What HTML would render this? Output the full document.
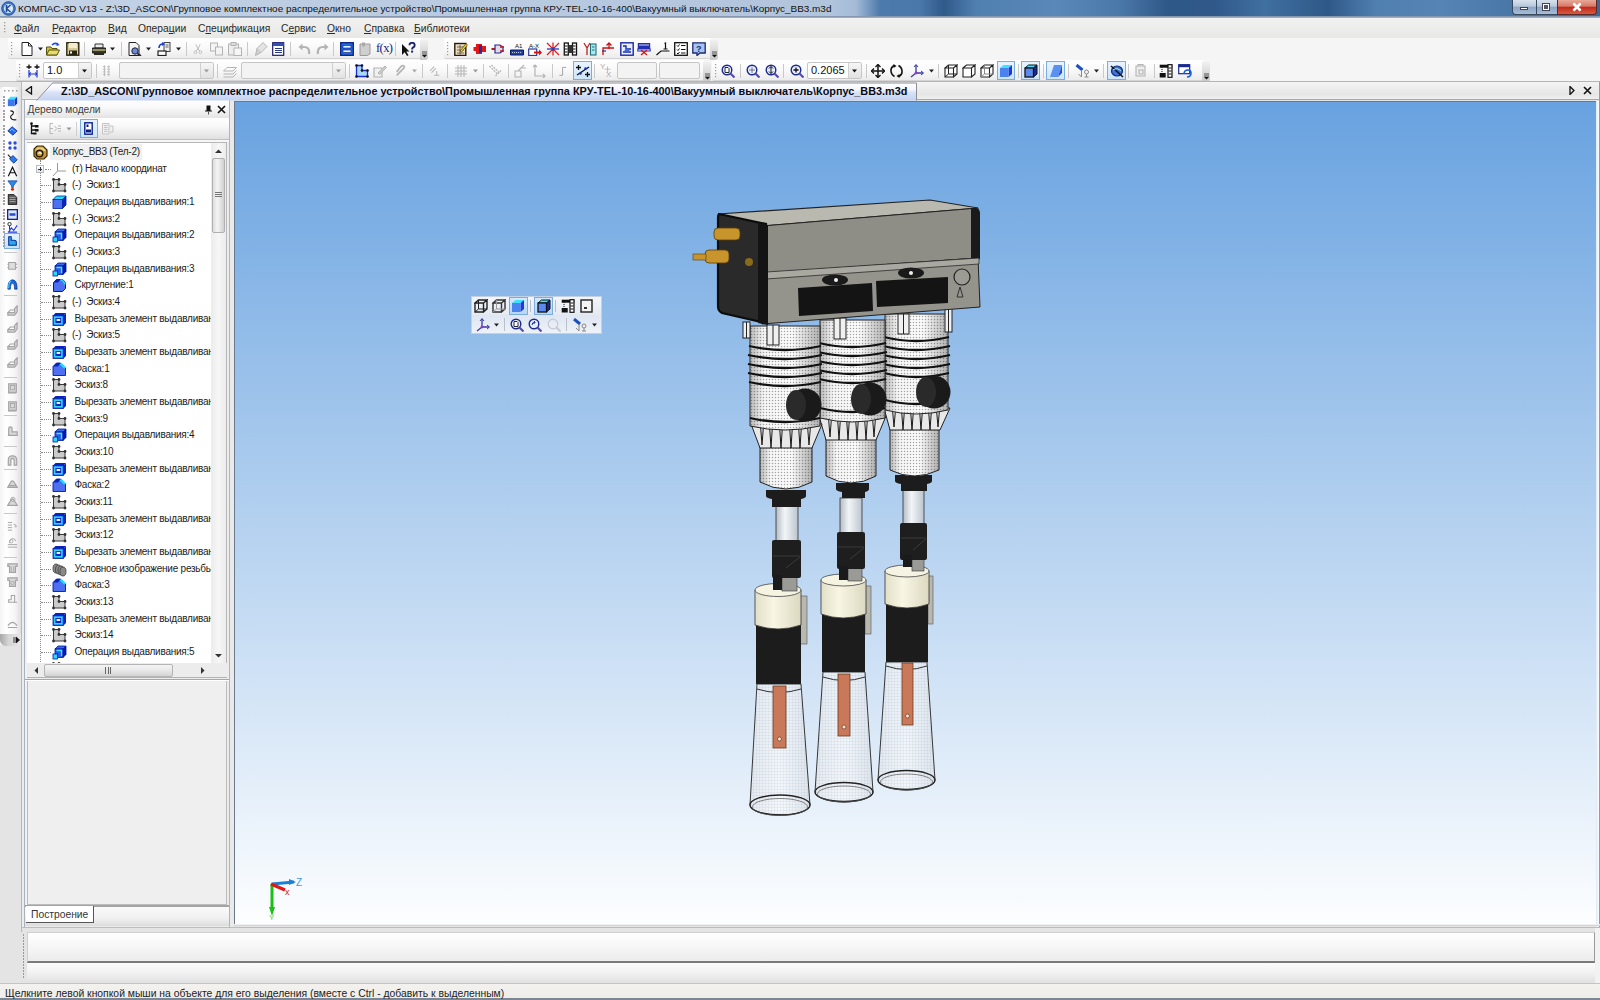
<!DOCTYPE html>
<html><head><meta charset="utf-8">
<style>
*{margin:0;padding:0;box-sizing:border-box}
html,body{width:1600px;height:1000px;overflow:hidden;background:#e4e4e4;font-family:"Liberation Sans",sans-serif;font-size:10px;color:#000;position:relative}
.a{position:absolute}
.tt{font-size:10px;letter-spacing:-0.24px;color:#1c1c1c;white-space:nowrap;line-height:12px}
#title{left:0;top:0;width:1600px;height:17px;background:linear-gradient(90deg,#c4d3e6 0,#bccde2 20%,#b4c6de 45%,#b0c4dc 52%,#a4bad6 53.5%,#4d7aac 55%,#4a78aa 57.5%,#2f5a8a 59%,#5080b0 61%,#5a88b8 66%,#4a78a8 70%,#2e5888 73%,#30598a 76%,#4070a0 79%,#2e5888 83%,#5080b0 86%,#5684b4 90%,#4a78a8 94%,#3a6898 100%)}
#title .t{left:18px;top:2px;font-size:9.95px;color:#111;white-space:nowrap;line-height:13px}
#titleline{left:0;top:16px;width:1600px;height:2px;background:linear-gradient(#7a8ea6,#aab6c4)}
#menu{left:0;top:18px;width:1600px;height:20px;background:linear-gradient(#f1f1f1,#e8e8e7)}
#menu span{position:absolute;top:5px;font-size:10.3px;color:#2a2a2a;white-space:nowrap}
#menu u{text-decoration:underline;text-underline-offset:1px}
#tb1{left:0;top:38px;width:1600px;height:22px;background:#f5f5f5}
#tb2{left:0;top:60px;width:1600px;height:22px;background:#f5f5f5;border-bottom:1px solid #c4c4c4}
.bar{position:absolute;background:linear-gradient(#fbfbfb,#f4f4f4 60%,#e4e4e4);border-bottom:1px solid #c8c8c8;border-radius:0 3px 3px 0}
#tabbar{left:22px;top:82px;width:1578px;height:19px;background:linear-gradient(#f4f4f4,#e9e9e9);border-top:1px solid #b9b9b9}
#lefttb{left:0;top:90px;width:21px;height:556px;background:linear-gradient(90deg,#f7f7f7,#ffffff 40%,#ececec)}
#panel{left:22px;top:100px;width:209px;height:828px;background:#ececec;border-left:1px solid #c9c9c9}
#viewport{left:234px;top:101px;width:1364px;height:825px;background:linear-gradient(#68a2e0 0%,#fdfeff 100%);border-left:1px solid #6b7a8a;border-top:1px solid #6b7a8a}
#cmd{left:22px;top:928px;width:1578px;height:55px;background:#e6e6e6}
#status{left:0;top:983px;width:1600px;height:17px;background:linear-gradient(#f4f2ef,#efedea);border-top:1px solid #c4c4c4;border-bottom:2px solid #7c8694}
#status .t{left:5px;top:3.5px;font-size:10.36px;color:#222;white-space:nowrap}
</style></head><body>
<svg width="0" height="0" style="position:absolute">
<defs>
<symbol id="i-root" viewBox="0 0 15 15">
<polygon points="4,1 10,1 14,5 14,11 11,14 4,14 1,11 1,4" fill="#c99a3a" stroke="#3b2a08" stroke-width="1.2"/>
<polygon points="4,2.5 10,2.5 12.5,5 12.5,6 3,6 2.5,5" fill="#f0cf7a"/>
<circle cx="6.5" cy="8.5" r="3.3" fill="none" stroke="#2a1e05" stroke-width="1.5"/>
<path d="M5.5 8.5 L7 7.5 L8.5 8.8" stroke="#fff" stroke-width="1.2" fill="none"/>
</symbol>
<symbol id="i-axes" viewBox="0 0 15 15">
<path d="M5.5 1 V9 H14 M5.5 9 L1 14" stroke="#9a9a9a" stroke-width="1" fill="none"/>
</symbol>
<symbol id="i-sk" viewBox="0 0 15 15">
<polygon points="1.5,1.5 7,1.5 7,6.5 13,6.5 13,13 1.5,13" fill="#cbcbcb" stroke="#3a3a3a" stroke-width="1"/>
<g fill="#333"><circle cx="1.5" cy="1.5" r="1.4"/><circle cx="7" cy="1.5" r="1.4"/><circle cx="7" cy="6.5" r="1.4"/><circle cx="13" cy="6.5" r="1.4"/><circle cx="13" cy="13" r="1.4"/><circle cx="1.5" cy="13" r="1.4"/></g>
</symbol>
<symbol id="i-ex1" viewBox="0 0 15 15">
<polygon points="1,4.5 4.5,1 14,1 10.5,4.5" fill="#22ddff" stroke="#0020a8" stroke-width="0.8"/>
<polygon points="10.5,4.5 14,1 14,10 10.5,13.5" fill="#0a22c0" stroke="#0020a8" stroke-width="0.8"/>
<rect x="1" y="4.5" width="9.5" height="9" fill="#4d70f2" stroke="#0020a8" stroke-width="0.8"/>
</symbol>
<symbol id="i-ex2" viewBox="0 0 15 15">
<polygon points="3,4 6,1 14,1 11,4" fill="#3a6af0" stroke="#0018a0" stroke-width="0.8"/>
<polygon points="11,4 14,1 14,9.5 11,12.5" fill="#0818b0" stroke="#0018a0" stroke-width="0.8"/>
<rect x="3" y="4" width="8" height="8.5" fill="#2a5ae8" stroke="#0018a0" stroke-width="0.8"/>
<path d="M4.5 5.5 H9.5 V11" stroke="#3ee6ff" stroke-width="1.3" fill="none"/>
<rect x="1" y="9" width="4.5" height="5" fill="#2ad8ff" stroke="#0018a0" stroke-width="0.8"/>
</symbol>
<symbol id="i-fil" viewBox="0 0 15 15">
<path d="M1.5 4.5 L4.5 1.5 H8.5 Q13.5 1.5 13.5 7 V10.5 L10.5 13.5 H1.5 Z" fill="#4d70f2" stroke="#0018a0" stroke-width="1"/>
<path d="M1.5 4.5 L4.5 1.5 H8.5 L6 4.5 Z" fill="#0a22c0"/>
<path d="M8.5 1.8 Q12 2.5 12.8 6.5" stroke="#22ddff" stroke-width="1.6" fill="none"/>
</symbol>
<symbol id="i-cut" viewBox="0 0 15 15">
<polygon points="1,3.5 3.5,1 14,1 11.5,3.5" fill="#0a22c0"/>
<polygon points="11.5,3.5 14,1 14,11 11.5,13.5" fill="#0a22c0"/>
<rect x="1" y="3.5" width="10.5" height="10" fill="#1a78f5" stroke="#0018a0" stroke-width="0.8"/>
<rect x="2.8" y="5.3" width="7" height="6.4" fill="#0a28c0" stroke="#33e6ff" stroke-width="1.2"/>
<rect x="4.6" y="7" width="3.6" height="2" fill="#e8f6ff"/>
</symbol>
<symbol id="i-ch" viewBox="0 0 15 15">
<polygon points="1,4.5 4.5,1 8.5,1 13.5,6 13.5,13.5 1,13.5" fill="#4d70f2" stroke="#0018a0" stroke-width="0.9"/>
<polygon points="1,4.5 4.5,1 8.5,1 6,4.5" fill="#0a22c0"/>
<path d="M8.5 1.5 L13 6" stroke="#22ddff" stroke-width="2.2"/>

</symbol>
<symbol id="i-thr" viewBox="0 0 15 15">
<g fill="#8a8a8a" stroke="#3a3a3a" stroke-width="0.8">
<ellipse cx="4" cy="6.5" rx="3" ry="4.5"/><ellipse cx="6.5" cy="7.5" rx="3" ry="4.5"/><ellipse cx="9" cy="8.5" rx="3" ry="4.5"/><ellipse cx="11" cy="9.5" rx="3" ry="4.5"/>
</g>
</symbol>
</defs></svg>

<div id="title" class="a"><div class="t a">КОМПАС-3D V13 - Z:\3D_ASCON\Групповое комплектное распределительное устройство\Промышленная группа КРУ-TEL-10-16-400\Вакуумный выключатель\Корпус_ВВ3.m3d</div></div>
<div id="titleline" class="a"></div>
<div id="menu" class="a">
<svg class="a" style="left:3px;top:4px" width="3" height="12"><g fill="#9a9a9a"><rect x="1" y="0" width="1.3" height="1.3"/><rect x="1" y="3" width="1.3" height="1.3"/><rect x="1" y="6" width="1.3" height="1.3"/><rect x="1" y="9" width="1.3" height="1.3"/></g></svg>
<span style="left:14px"><u>Ф</u>айл</span><span style="left:52px"><u>Р</u>едактор</span><span style="left:108px"><u>В</u>ид</span><span style="left:138px">Опера<u>ц</u>ии</span><span style="left:198px">С<u>п</u>ецификация</span><span style="left:281px">С<u>е</u>рвис</span><span style="left:327px"><u>О</u>кно</span><span style="left:364px"><u>С</u>правка</span><span style="left:414px"><u>Б</u>иблиотеки</span>
</div>
<div id="tb1" class="a"></div>
<div id="tb2" class="a"></div>
<div class="a" style="left:8px;top:38px;width:413px;height:21px;background:linear-gradient(#ffffff,#f9f9f9 50%,#ececec);border-bottom:1px solid #d4d4d4;border-radius:2px 0 0 2px"></div>
<div class="a" style="left:420px;top:40px;width:8px;height:20px;background:linear-gradient(#f0f0f0,#d8d8d8 60%,#c8c8c8);border-radius:0 3px 3px 0"></div>
<svg class="a" style="left:421px;top:51px" width="7" height="7"><path d="M1 1H6M1 3H6" stroke="#333" stroke-width=".8"/><path d="M1 4 H6 L3.5 6.5Z" fill="#111"/></svg>
<svg class="a" style="left:10px;top:42px" width="3" height="14"><g fill="#9a9a9a"><rect x="1" y="0" width="1.2" height="1.2"/><rect x="1" y="3" width="1.2" height="1.2"/><rect x="1" y="6" width="1.2" height="1.2"/><rect x="1" y="9" width="1.2" height="1.2"/><rect x="1" y="12" width="1.2" height="1.2"/></g></svg>
<svg class="a" style="left:20px;top:42px" width="14" height="14" viewBox="0 0 14 14"><path d="M2 0.5H8.5L12 4V13.5H2Z" fill="#fff" stroke="#222"/><path d="M8.5 0.5V4H12" fill="none" stroke="#222"/></svg>
<svg class="a" style="left:37.5px;top:47px" width="6" height="4"><path d="M0 0.5H5L2.5 3.5Z" fill="#222"/></svg>
<svg class="a" style="left:46px;top:42px" width="14" height="14" viewBox="0 0 14 14"><path d="M0.5 5H5L6 6.5H11V13H0.5Z" fill="#c9c04a" stroke="#5a5210"/><path d="M0.5 13L3 8H13.5L11 13Z" fill="#e6dc6a" stroke="#5a5210"/><path d="M6 3Q9 0 12 2.5" stroke="#1a4ae0" stroke-width="1.6" fill="none"/><path d="M11 0.5L13.5 3L10.5 4Z" fill="#1a4ae0"/></svg>
<svg class="a" style="left:66px;top:42px" width="14" height="14" viewBox="0 0 14 14"><rect x="0.8" y="0.8" width="12" height="12.4" fill="#d6c99a" stroke="#2a2410" stroke-width="1.4"/><rect x="3" y="1" width="8" height="5" fill="#f4ecd0"/><rect x="3" y="8.5" width="8" height="4.5" fill="#2a2410"/><rect x="4" y="9.5" width="2" height="2" fill="#fff"/></svg>
<div class="a" style="left:84px;top:42px;width:1px;height:14px;background:#c9c9c9"></div>
<svg class="a" style="left:91px;top:42px" width="16" height="14" viewBox="0 0 14 14"><path d="M3 2H11V6H3Z" fill="#eee" stroke="#333"/><path d="M0.5 6H13.5V11H0.5Z" fill="#3a3a2a" stroke="#222"/><path d="M0.5 8H13.5" stroke="#b8b070" stroke-width="1.5"/><path d="M2 11H12V13H2Z" fill="#2a2a1a"/></svg>
<svg class="a" style="left:109.5px;top:47px" width="6" height="4"><path d="M0 0.5H5L2.5 3.5Z" fill="#222"/></svg>
<div class="a" style="left:121px;top:42px;width:1px;height:14px;background:#c9c9c9"></div>
<svg class="a" style="left:128px;top:42px" width="14" height="14" viewBox="0 0 14 14"><path d="M1 0.5H8L11 3.5V13.5H1Z" fill="#f4f4f4" stroke="#222"/><circle cx="7" cy="9" r="3.2" fill="#6a8ad8" stroke="#223" /><path d="M9.5 11.5L13 14" stroke="#223" stroke-width="1.6"/></svg>
<svg class="a" style="left:145.5px;top:47px" width="6" height="4"><path d="M0 0.5H5L2.5 3.5Z" fill="#222"/></svg>
<svg class="a" style="left:157px;top:42px" width="14" height="14" viewBox="0 0 14 14"><rect x="7" y="0.5" width="6" height="9" fill="#eee" stroke="#444"/><path d="M8.5 3H11.5M8.5 5H11.5" stroke="#666"/><path d="M2 6Q2 2 6 2" stroke="#1a40d0" stroke-width="1.6" fill="none"/><path d="M5 0L8 2L5 4Z" fill="#1a40d0"/><rect x="1" y="9" width="8" height="4.5" fill="#fff" stroke="#222" stroke-width="1.2"/></svg>
<svg class="a" style="left:175.5px;top:47px" width="6" height="4"><path d="M0 0.5H5L2.5 3.5Z" fill="#222"/></svg>
<div class="a" style="left:186px;top:42px;width:1px;height:14px;background:#c9c9c9"></div>
<svg class="a" style="left:193px;top:42px" width="10" height="14" viewBox="0 0 14 14"><path d="M4 0.5L7 7L10 0.5M7 7L4 10M7 7L10 10" stroke="#b4b4b4" fill="none" stroke-width="1.2"/><circle cx="3.5" cy="11.5" r="2" fill="none" stroke="#b4b4b4"/><circle cx="10.5" cy="11.5" r="2" fill="none" stroke="#b4b4b4"/></svg>
<svg class="a" style="left:210px;top:42px" width="14" height="14" viewBox="0 0 14 14"><rect x="0.5" y="1" width="7" height="8" fill="#f4f4f4" stroke="#b4b4b4"/><rect x="5.5" y="5" width="7" height="8" fill="#f4f4f4" stroke="#b4b4b4"/></svg>
<svg class="a" style="left:228px;top:42px" width="14" height="14" viewBox="0 0 14 14"><rect x="0.5" y="2" width="10" height="11" fill="#eee" stroke="#b4b4b4"/><rect x="3" y="0.5" width="5" height="3" fill="#ddd" stroke="#b4b4b4"/><rect x="6" y="6" width="7.5" height="7.5" fill="#f6f6f6" stroke="#b4b4b4"/></svg>
<div class="a" style="left:247px;top:42px;width:1px;height:14px;background:#c9c9c9"></div>
<svg class="a" style="left:255px;top:42px" width="14" height="14" viewBox="0 0 14 14"><path d="M8 0.5L12 4.5L6 10.5L2 6.5Z" fill="#e4e4e4" stroke="#b4b4b4"/><path d="M2 6.5L0.5 13.5L6 10.5" fill="#d0d0d0" stroke="#b4b4b4"/></svg>
<svg class="a" style="left:272px;top:42px" width="14" height="14" viewBox="0 0 14 14"><rect x="0.7" y="0.7" width="11" height="12.6" fill="#fff" stroke="#1a1a6a" stroke-width="1.2"/><rect x="1" y="1" width="10.5" height="3" fill="#3050c0"/><path d="M3 6.5H10M3 8.5H10M3 10.5H10" stroke="#2a3a8a" stroke-width="1.1"/></svg>
<div class="a" style="left:290px;top:42px;width:1px;height:14px;background:#c9c9c9"></div>
<svg class="a" style="left:298px;top:42px" width="14" height="14" viewBox="0 0 14 14"><path d="M11 12Q12 5 6 5H3" stroke="#b4b4b4" stroke-width="2.2" fill="none"/><path d="M0.5 5L4.5 1.5V8.5Z" fill="#b4b4b4"/></svg>
<svg class="a" style="left:315px;top:42px" width="14" height="14" viewBox="0 0 14 14"><path d="M3 12Q2 5 8 5H11" stroke="#b4b4b4" stroke-width="2.2" fill="none"/><path d="M13.5 5L9.5 1.5V8.5Z" fill="#b4b4b4"/></svg>
<div class="a" style="left:333px;top:42px;width:1px;height:14px;background:#c9c9c9"></div>
<svg class="a" style="left:340px;top:42px" width="14" height="14" viewBox="0 0 14 14"><rect x="0.7" y="0.7" width="12.6" height="12.6" fill="#1f6ae8" stroke="#0a1e78" stroke-width="1.3"/><rect x="3" y="3.5" width="8" height="2.5" fill="#e8f0ff" stroke="#0a1e78" stroke-width=".6"/><rect x="3" y="8" width="8" height="2.5" fill="#e8f0ff" stroke="#0a1e78" stroke-width=".6"/></svg>
<svg class="a" style="left:358px;top:42px" width="14" height="14" viewBox="0 0 14 14"><path d="M2 2H12V12L9 13.5H2Z" fill="#cfcfcf" stroke="#9a9a9a"/><rect x="4" y="0.5" width="3" height="4" fill="#aaa"/></svg>
<div class="a" style="left:376px;top:41px;font-size:12.5px;color:#14208a;font-family:'Liberation Serif',serif;white-space:nowrap;letter-spacing:-0.6px">f(x)</div>
<div class="a" style="left:395px;top:42px;width:1px;height:14px;background:#c9c9c9"></div>
<svg class="a" style="left:401px;top:42px" width="15" height="14" viewBox="0 0 14 14"><path d="M0.5 2V13L3.2 10.3L5.5 14L7 13.2L4.8 9.5H8Z" fill="#111"/><path d="M8 3.2Q8 0.8 10.6 0.8Q13.2 0.8 13.2 3.2Q13.2 4.8 11.4 5.6Q10.6 6 10.6 7.5" stroke="#1a2470" stroke-width="1.9" fill="none"/><rect x="9.6" y="8.6" width="2" height="2" fill="#1a2470"/></svg>
<div class="a" style="left:444px;top:38px;width:267px;height:21px;background:linear-gradient(#ffffff,#f9f9f9 50%,#ececec);border-bottom:1px solid #d4d4d4;border-radius:2px 0 0 2px"></div>
<div class="a" style="left:710px;top:40px;width:8px;height:20px;background:linear-gradient(#f0f0f0,#d8d8d8 60%,#c8c8c8);border-radius:0 3px 3px 0"></div>
<svg class="a" style="left:711px;top:51px" width="7" height="7"><path d="M1 1H6M1 3H6" stroke="#333" stroke-width=".8"/><path d="M1 4 H6 L3.5 6.5Z" fill="#111"/></svg>
<svg class="a" style="left:446px;top:42px" width="3" height="14"><g fill="#9a9a9a"><rect x="1" y="0" width="1.2" height="1.2"/><rect x="1" y="3" width="1.2" height="1.2"/><rect x="1" y="6" width="1.2" height="1.2"/><rect x="1" y="9" width="1.2" height="1.2"/><rect x="1" y="12" width="1.2" height="1.2"/></g></svg>
<svg class="a" style="left:454px;top:42px" width="14" height="14" viewBox="0 0 14 14"><rect x="0.8" y="1.5" width="11" height="12" fill="#e8dcc0" stroke="#2a1a0a" stroke-width="1.4"/><path d="M3 5H10M3 8H10M3 11H10M6 3V13" stroke="#5a4a3a" stroke-width=".8"/><path d="M6 9L12 1.5L13.5 3L7.5 10Z" fill="#e8d020" stroke="#3a3000" stroke-width=".6"/></svg>
<svg class="a" style="left:473px;top:42px" width="14" height="14" viewBox="0 0 14 14"><path d="M3 2H9V12H3Z" fill="#e01818"/><path d="M0.5 5H4V9H0.5Z M9 4H13V10H9Z" fill="#e01818"/><rect x="6" y="3" width="3" height="8" fill="#2a2aa0"/></svg>
<svg class="a" style="left:491px;top:42px" width="14" height="14" viewBox="0 0 14 14"><path d="M0.5 7H4" stroke="#d01010" stroke-width="2"/><path d="M4 3H9L12 5V9L9 11H4Z" fill="#dde" stroke="#2a2a8a" stroke-width="1.2"/><path d="M9 5H13M9 9H13" stroke="#d01010" stroke-width="1.5"/></svg>
<svg class="a" style="left:510px;top:42px" width="14" height="14" viewBox="0 0 14 14"><text x="5" y="6" font-size="6" fill="#111" font-family="Liberation Sans">A1</text><path d="M0.5 8H13.5V13H0.5Z" fill="#2040b0" stroke="#0a1a60"/><path d="M2 10.5H12" stroke="#bcd" stroke-width="1" stroke-dasharray="1 1"/></svg>
<svg class="a" style="left:528px;top:42px" width="14" height="14" viewBox="0 0 14 14"><text x="1" y="5.5" font-size="6" fill="#111" font-family="Liberation Sans">A-X</text><rect x="0.7" y="7" width="8" height="6.5" fill="#fff" stroke="#2a3a9a" stroke-width="1.2"/><path d="M6 10.5H13" stroke="#e01010" stroke-width="2"/><path d="M11 7.5L14 10.5L11 13.5Z" fill="#e01010"/></svg>
<svg class="a" style="left:546px;top:42px" width="14" height="14" viewBox="0 0 14 14"><path d="M1 1L13 13M13 1L1 13M7 0.5V13.5" stroke="#e02020" stroke-width="1.3"/><path d="M1 7H13" stroke="#2040c0" stroke-width="1.3"/><circle cx="7" cy="7" r="1.5" fill="#2040c0"/></svg>
<svg class="a" style="left:563px;top:42px" width="15" height="14" viewBox="0 0 14 14"><rect x="0.8" y="1" width="4" height="12" fill="#fff" stroke="#111" stroke-width="1.3"/><rect x="9" y="1" width="4" height="12" fill="#fff" stroke="#111" stroke-width="1.3"/><rect x="5" y="3" width="4" height="8" fill="#333"/><path d="M1.5 4H4M1.5 7H4M1.5 10H4M9.5 4H12M9.5 7H12M9.5 10H12" stroke="#111"/></svg>
<svg class="a" style="left:583px;top:42px" width="14" height="14" viewBox="0 0 14 14"><path d="M1 1L4 6L7 1M4 6V13" stroke="#c02020" stroke-width="1.3" fill="none"/><rect x="7.5" y="2" width="5.5" height="11" fill="#a8e8f0" stroke="#20707a" stroke-width="1.1"/><path d="M9 5H11.5M9 8H11.5" stroke="#20707a"/></svg>
<svg class="a" style="left:602px;top:42px" width="14" height="14" viewBox="0 0 14 14"><path d="M1 13V6H12" stroke="#d01010" stroke-width="1.3" fill="none"/><path d="M7 1V7M4.5 3.5L7 1L9.5 3.5" stroke="#d01010" stroke-width="1.3" fill="none"/><path d="M0 9H4" stroke="#2030a0" stroke-width="1.2"/></svg>
<svg class="a" style="left:620px;top:42px" width="14" height="14" viewBox="0 0 14 14"><rect x="0.8" y="0.8" width="12.4" height="12.4" fill="#e8eeff" stroke="#1a2aa0" stroke-width="1.4"/><path d="M3 4H6V7H11M3 10H11" stroke="#1a2aa0" stroke-width="1.4" fill="none"/><path d="M4 9L7 6L10 9" fill="#3a6ae0"/></svg>
<svg class="a" style="left:637px;top:42px" width="14" height="14" viewBox="0 0 14 14"><rect x="0.8" y="1" width="12.4" height="6" fill="#2030b0"/><rect x="0.8" y="7" width="12.4" height="2" fill="#fff" stroke="#2030b0"/><path d="M4 8L10 13M10 8L4 13" stroke="#e01010" stroke-width="1.3"/><path d="M2 3H12" stroke="#fff" stroke-width=".8"/></svg>
<svg class="a" style="left:656px;top:42px" width="14" height="14" viewBox="0 0 14 14"><path d="M0.5 13L5 9H13.5" stroke="#111" stroke-width="1.2" fill="none"/><path d="M8.5 1.5L9.5 1V7M7.5 7H11.5" stroke="#111" stroke-width="1.2" fill="none"/></svg>
<svg class="a" style="left:674px;top:42px" width="14" height="14" viewBox="0 0 14 14"><rect x="0.7" y="0.7" width="12.6" height="12.6" fill="#fff" stroke="#111" stroke-width="1.3"/><path d="M3 3.5L4 4.5L5.5 2.5M3 7.5L4 8.5L5.5 6.5M3 11L4 12L5.5 10M7 3.5H11.5M7 7.5H11.5M7 11H11.5" stroke="#111" stroke-width="1" fill="none"/></svg>
<svg class="a" style="left:692px;top:42px" width="14" height="14" viewBox="0 0 14 14"><path d="M0.8 0.8H13.2V11H8L5 13.5V11H0.8Z" fill="#a8c4f0" stroke="#1a2a70" stroke-width="1.3"/><text x="4" y="9.5" font-size="9" font-weight="bold" fill="#1a2a70" font-family="Liberation Sans">?</text></svg>
<div class="a" style="left:16px;top:60px;width:688px;height:21px;background:linear-gradient(#ffffff,#f9f9f9 50%,#ececec);border-bottom:1px solid #d4d4d4;border-radius:2px 0 0 2px"></div>
<div class="a" style="left:703px;top:62px;width:8px;height:20px;background:linear-gradient(#f0f0f0,#d8d8d8 60%,#c8c8c8);border-radius:0 3px 3px 0"></div>
<svg class="a" style="left:704px;top:73px" width="7" height="7"><path d="M1 1H6M1 3H6" stroke="#333" stroke-width=".8"/><path d="M1 4 H6 L3.5 6.5Z" fill="#111"/></svg>
<svg class="a" style="left:18px;top:64px" width="3" height="14"><g fill="#9a9a9a"><rect x="1" y="0" width="1.2" height="1.2"/><rect x="1" y="3" width="1.2" height="1.2"/><rect x="1" y="6" width="1.2" height="1.2"/><rect x="1" y="9" width="1.2" height="1.2"/><rect x="1" y="12" width="1.2" height="1.2"/></g></svg>
<svg class="a" style="left:26px;top:64px" width="14" height="14" viewBox="0 0 14 14"><path d="M3 0.5V5M0.5 3H5.5M11 0.5V5M8.5 3H13.5" stroke="#111" stroke-width="1.3"/><path d="M3 6V13.5M11 6V13.5M3 10H11" stroke="#1a30e0" stroke-width="1.2"/><path d="M5 8.5L3 10L5 11.5M9 8.5L11 10L9 11.5" stroke="#1a30e0" fill="none"/></svg>
<div class="a" style="left:43px;top:62px;width:49px;height:17px;background:#ffffff;border:1px solid #c6c6c6;border-radius:2px"></div>
<div class="a" style="left:78px;top:63px;width:13px;height:15px;background:linear-gradient(#f6f6f6,#e2e2e2);border-left:1px solid #d0d0d0"></div>
<svg class="a" style="left:82.0px;top:69px" width="6" height="4"><path d="M0 0.5H5L2.5 3.5Z" fill="#111"/></svg>
<div class="a" style="left:47px;top:64px;font-size:11px;color:#111;white-space:nowrap">1.0</div>
<div class="a" style="left:96px;top:64px;width:1px;height:14px;background:#c9c9c9"></div>
<svg class="a" style="left:102px;top:64px" width="12" height="14" viewBox="0 0 14 14"><path d="M1 2H4M1 5H4M1 8H4M1 11H4M6 2H9M6 5H9M6 8H9M6 11H9M3 0.5V13M8 0.5V13" stroke="#b4b4b4" stroke-width="1"/></svg>
<div class="a" style="left:119px;top:62px;width:95px;height:17px;background:#f3f3f3;border:1px solid #c6c6c6;border-radius:2px"></div>
<div class="a" style="left:200px;top:63px;width:13px;height:15px;background:linear-gradient(#f6f6f6,#e2e2e2);border-left:1px solid #d0d0d0"></div>
<svg class="a" style="left:204.0px;top:69px" width="6" height="4"><path d="M0 0.5H5L2.5 3.5Z" fill="#999"/></svg>
<div class="a" style="left:217px;top:64px;width:1px;height:14px;background:#c9c9c9"></div>
<svg class="a" style="left:223px;top:64px" width="14" height="14" viewBox="0 0 14 14"><path d="M0.5 7H10L13.5 3.5H4Z M0.5 10H10L13.5 6.5 M0.5 13H10L13.5 9.5" stroke="#b4b4b4" fill="none"/></svg>
<div class="a" style="left:241px;top:62px;width:105px;height:17px;background:#f3f3f3;border:1px solid #c6c6c6;border-radius:2px"></div>
<div class="a" style="left:332px;top:63px;width:13px;height:15px;background:linear-gradient(#f6f6f6,#e2e2e2);border-left:1px solid #d0d0d0"></div>
<svg class="a" style="left:336.0px;top:69px" width="6" height="4"><path d="M0 0.5H5L2.5 3.5Z" fill="#999"/></svg>
<div class="a" style="left:349px;top:64px;width:1px;height:14px;background:#c9c9c9"></div>
<svg class="a" style="left:355px;top:64px" width="14" height="14" viewBox="0 0 14 14"><path d="M1.5 1.5H7V6.5H12.5V12.5H1.5Z" fill="#a8d8f4" stroke="#1a2ae0" stroke-width="1.3"/><g fill="#111"><circle cx="1.5" cy="1.5" r="1.3"/><circle cx="7" cy="1.5" r="1.3"/><circle cx="7" cy="6.5" r="1.3"/><circle cx="12.5" cy="6.5" r="1.3"/><circle cx="12.5" cy="12.5" r="1.3"/><circle cx="1.5" cy="12.5" r="1.3"/></g></svg>
<svg class="a" style="left:373px;top:64px" width="14" height="14" viewBox="0 0 14 14"><path d="M1 4H9V13H1Z" fill="#f0f0f0" stroke="#b4b4b4" stroke-width="1.2"/><path d="M5 9L12 2L13.5 3.5L6.5 10.5Z" fill="#ccc" stroke="#b4b4b4"/></svg>
<svg class="a" style="left:395px;top:64px" width="12" height="14" viewBox="0 0 14 14"><path d="M2 12L10 4Q12 2 10 1Q8 0 6 3L2 8" stroke="#b4b4b4" stroke-width="2" fill="none"/></svg>
<svg class="a" style="left:411.5px;top:69px" width="6" height="4"><path d="M0 0.5H5L2.5 3.5Z" fill="#aaa"/></svg>
<div class="a" style="left:422px;top:64px;width:1px;height:14px;background:#c9c9c9"></div>
<svg class="a" style="left:429px;top:64px" width="12" height="14" viewBox="0 0 14 14"><path d="M1 7L6 2M3 9L8 4M6 12H12M9 7V12" stroke="#b4b4b4" stroke-width="1.2" fill="none"/></svg>
<div class="a" style="left:447px;top:64px;width:1px;height:14px;background:#c9c9c9"></div>
<svg class="a" style="left:454px;top:64px" width="14" height="14" viewBox="0 0 14 14"><path d="M1 4H13M1 7H13M1 10H13M4 1V13M7 1V13M10 1V13" stroke="#b4b4b4" stroke-width="1"/></svg>
<svg class="a" style="left:472.5px;top:69px" width="6" height="4"><path d="M0 0.5H5L2.5 3.5Z" fill="#999"/></svg>
<div class="a" style="left:483px;top:64px;width:1px;height:14px;background:#c9c9c9"></div>
<svg class="a" style="left:488px;top:64px" width="15" height="14" viewBox="0 0 14 14"><path d="M1 2L9 10M3 1L11 9M7 12L13 6" stroke="#b4b4b4" stroke-width="1.2" stroke-dasharray="2 1"/></svg>
<div class="a" style="left:508px;top:64px;width:1px;height:14px;background:#c9c9c9"></div>
<svg class="a" style="left:514px;top:64px" width="14" height="14" viewBox="0 0 14 14"><path d="M1 13V7H7V13Z M4 7L10 1M7 4L12 4" stroke="#b4b4b4" stroke-width="1.1" fill="none"/></svg>
<svg class="a" style="left:532px;top:64px" width="14" height="14" viewBox="0 0 14 14"><path d="M3 1V12H13M1 3L3 1L5 3M11 10L13 12L11 14" stroke="#b4b4b4" stroke-width="1.2" fill="none"/></svg>
<div class="a" style="left:552px;top:64px;width:1px;height:14px;background:#c9c9c9"></div>
<svg class="a" style="left:559px;top:64px" width="10" height="14" viewBox="0 0 14 14"><path d="M0.5 13H5V2H10" stroke="#999" stroke-width="1.2" fill="none"/></svg>
<div class="a" style="left:573px;top:61px;width:19px;height:19px;background:linear-gradient(#e8f4ff,#cde5fb);border:1px solid #79aee3"></div>
<svg class="a" style="left:576px;top:64px" width="14" height="14" viewBox="0 0 14 14"><path d="M1 11L13 3" stroke="#111" stroke-width="1.3"/><path d="M2.5 1V6M0 3.5H5M11.5 8V13M9 10.5H14" stroke="#111" stroke-width="1.3"/><circle cx="4.5" cy="9.5" r="1.2" fill="#1a30c0"/><circle cx="9.5" cy="4.5" r="1.2" fill="#1a30c0"/></svg>
<div class="a" style="left:594px;top:64px;width:1px;height:14px;background:#c9c9c9"></div>
<div class="a" style="left:600px;top:62px;font-size:8px;color:#aaa">Y</div><div class="a" style="left:606px;top:70px;font-size:8px;color:#aaa">X</div>
<svg class="a" style="left:604px;top:64px" width="10" height="14" viewBox="0 0 14 14"><path d="M5 0.5V9M1 4.5H9" stroke="#b4b4b4" stroke-width="1.2"/></svg>
<div class="a" style="left:617px;top:62px;width:40px;height:17px;background:#f3f3f3;border:1px solid #c6c6c6;border-radius:2px"></div>
<div class="a" style="left:659px;top:62px;width:41px;height:17px;background:#f3f3f3;border:1px solid #c6c6c6;border-radius:2px"></div>
<div class="a" style="left:712px;top:60px;width:491px;height:21px;background:linear-gradient(#ffffff,#f9f9f9 50%,#ececec);border-bottom:1px solid #d4d4d4;border-radius:2px 0 0 2px"></div>
<div class="a" style="left:1202px;top:62px;width:8px;height:20px;background:linear-gradient(#f0f0f0,#d8d8d8 60%,#c8c8c8);border-radius:0 3px 3px 0"></div>
<svg class="a" style="left:1203px;top:73px" width="7" height="7"><path d="M1 1H6M1 3H6" stroke="#333" stroke-width=".8"/><path d="M1 4 H6 L3.5 6.5Z" fill="#111"/></svg>
<svg class="a" style="left:714px;top:64px" width="3" height="14"><g fill="#9a9a9a"><rect x="1" y="0" width="1.2" height="1.2"/><rect x="1" y="3" width="1.2" height="1.2"/><rect x="1" y="6" width="1.2" height="1.2"/><rect x="1" y="9" width="1.2" height="1.2"/><rect x="1" y="12" width="1.2" height="1.2"/></g></svg>
<svg class="a" style="left:721px;top:64px" width="14" height="14" viewBox="0 0 14 14"><circle cx="6" cy="6" r="4.8" fill="#e8eeff" stroke="#1a2a90" stroke-width="1.4"/><path d="M9.5 9.5L13.5 13.5" stroke="#5a4ab0" stroke-width="2.2"/><path d="M4 3.5H7L8 4.5V8.5H4Z" fill="#fff" stroke="#111" stroke-width=".9"/></svg>
<div class="a" style="left:740px;top:64px;width:1px;height:14px;background:#c9c9c9"></div>
<svg class="a" style="left:746px;top:64px" width="14" height="14" viewBox="0 0 14 14"><circle cx="6" cy="6" r="4.8" fill="#e8eeff" stroke="#1a2a90" stroke-width="1.4"/><path d="M9.5 9.5L13.5 13.5" stroke="#5a4ab0" stroke-width="2.2"/><path d="M3.5 6H8.5M6 3.5V8.5" stroke="#111" stroke-dasharray="1 1"/></svg>
<svg class="a" style="left:765px;top:64px" width="14" height="14" viewBox="0 0 14 14"><circle cx="6" cy="6" r="4.8" fill="#e8eeff" stroke="#1a2a90" stroke-width="1.4"/><path d="M9.5 9.5L13.5 13.5" stroke="#5a4ab0" stroke-width="2.2"/><path d="M6 2.5V9.5M4 4.5L6 2.5L8 4.5M4 7.5L6 9.5L8 7.5" stroke="#111" fill="none"/></svg>
<div class="a" style="left:783px;top:64px;width:1px;height:14px;background:#c9c9c9"></div>
<svg class="a" style="left:790px;top:64px" width="14" height="14" viewBox="0 0 14 14"><circle cx="6" cy="6" r="4.8" fill="#e8eeff" stroke="#1a2a90" stroke-width="1.4"/><path d="M9.5 9.5L13.5 13.5" stroke="#5a4ab0" stroke-width="2.2"/><path d="M3.5 6H8.5M6 3.5V8.5" stroke="#111" stroke-width="1.3"/></svg>
<div class="a" style="left:807px;top:62px;width:55px;height:17px;background:#ffffff;border:1px solid #c6c6c6;border-radius:2px"></div>
<div class="a" style="left:848px;top:63px;width:13px;height:15px;background:linear-gradient(#f6f6f6,#e2e2e2);border-left:1px solid #d0d0d0"></div>
<svg class="a" style="left:852.0px;top:69px" width="6" height="4"><path d="M0 0.5H5L2.5 3.5Z" fill="#111"/></svg>
<div class="a" style="left:811px;top:64px;font-size:11px;color:#111;white-space:nowrap">0.2065</div>
<div class="a" style="left:866px;top:64px;width:1px;height:14px;background:#c9c9c9"></div>
<svg class="a" style="left:871px;top:64px" width="14" height="14" viewBox="0 0 14 14"><path d="M7 0.5V13.5M0.5 7H13.5" stroke="#111" stroke-width="1.5"/><path d="M4.5 3L7 0.5L9.5 3M4.5 11L7 13.5L9.5 11M3 4.5L0.5 7L3 9.5M11 4.5L13.5 7L11 9.5" stroke="#111" stroke-width="1.3" fill="none"/></svg>
<svg class="a" style="left:889px;top:64px" width="15" height="14" viewBox="0 0 14 14"><path d="M5 1.5Q1 3 1.5 7.5Q2 11 5 12.5M9 12.5Q13 11 12.5 6.5Q12 3 9 1.5" stroke="#111" stroke-width="1.6" fill="none"/><path d="M4 0L7 2L4 4Z M10 10L7 12L10 14Z" fill="#111"/></svg>
<svg class="a" style="left:910px;top:64px" width="14" height="14" viewBox="0 0 14 14"><path d="M6 1V9L1 13M6 9H13" stroke="#3a3aa0" stroke-width="1.3" fill="none"/><path d="M4 3L6 0.5L8 3M11 7L13.5 9L11 11" stroke="#3a3aa0" fill="none"/><circle cx="6" cy="9" r="1.4" fill="#8a3ad0"/></svg>
<svg class="a" style="left:928.5px;top:69px" width="6" height="4"><path d="M0 0.5H5L2.5 3.5Z" fill="#222"/></svg>
<div class="a" style="left:938px;top:64px;width:1px;height:14px;background:#c9c9c9"></div>
<svg class="a" style="left:944px;top:64px" width="14" height="14" viewBox="0 0 14 14"><path d="M1 4L4.5 1H13L9.5 4ZM9.5 4L13 1V10L9.5 13ZM1 4H9.5V13H1Z" fill="#fff" stroke="#222" stroke-width="1.1"/><path d="M1 13L4.5 10H13M4.5 1V10" stroke="#222" fill="none"/></svg>
<svg class="a" style="left:962px;top:64px" width="14" height="14" viewBox="0 0 14 14"><path d="M1 4L4.5 1H13L9.5 4ZM9.5 4L13 1V10L9.5 13ZM1 4H9.5V13H1Z" fill="#fff" stroke="#222" stroke-width="1.1"/></svg>
<svg class="a" style="left:980px;top:64px" width="14" height="14" viewBox="0 0 14 14"><path d="M1 4L4.5 1H13L9.5 4ZM9.5 4L13 1V10L9.5 13ZM1 4H9.5V13H1Z" fill="#fff" stroke="#222" stroke-width="1.1"/><path d="M4.5 10H13M4.5 1V10L1 13" stroke="#888" fill="none"/></svg>
<div class="a" style="left:997px;top:61px;width:18px;height:19px;background:linear-gradient(#e8f4ff,#cde5fb);border:1px solid #79aee3"></div>
<svg class="a" style="left:999px;top:64px" width="14" height="14" viewBox="0 0 14 14"><path d="M1 4L4.5 1H13L9.5 4Z" fill="#3ee0ff"/><path d="M9.5 4L13 1V10L9.5 13Z" fill="#1e3ad8"/><rect x="1" y="4" width="8.5" height="9" fill="#4a82f0"/></svg>
<div class="a" style="left:1018px;top:64px;width:1px;height:14px;background:#c9c9c9"></div>
<div class="a" style="left:1021px;top:61px;width:19px;height:19px;background:linear-gradient(#e8f4ff,#cde5fb);border:1px solid #79aee3"></div>
<svg class="a" style="left:1024px;top:64px" width="14" height="14" viewBox="0 0 14 14"><path d="M1 4L4.5 1H13L9.5 4Z" fill="#3ee0ff" stroke="#111"/><path d="M9.5 4L13 1V10L9.5 13Z" fill="#1a2a90" stroke="#111"/><rect x="1" y="4" width="8.5" height="9" fill="#5a8af0" stroke="#111" stroke-width="1.3"/></svg>
<div class="a" style="left:1043px;top:64px;width:1px;height:14px;background:#c9c9c9"></div>
<div class="a" style="left:1046px;top:61px;width:19px;height:19px;background:linear-gradient(#e8f4ff,#cde5fb);border:1px solid #79aee3"></div>
<svg class="a" style="left:1049px;top:64px" width="14" height="14" viewBox="0 0 14 14"><path d="M1 13H9L13 1H5Z" fill="#5a90f0"/><path d="M9 13L13 1V9Z" fill="#2a4ad8"/></svg>
<div class="a" style="left:1068px;top:64px;width:1px;height:14px;background:#c9c9c9"></div>
<svg class="a" style="left:1075px;top:64px" width="15" height="14" viewBox="0 0 14 14"><path d="M1 1L7 6" stroke="#1a50c0" stroke-width="3"/><path d="M6 6V13M3 10L6 13" stroke="#888" fill="none"/><circle cx="11" cy="8" r="2" fill="none" stroke="#888"/><path d="M11 10V13M9 13H13" stroke="#888"/></svg>
<svg class="a" style="left:1093.5px;top:69px" width="6" height="4"><path d="M0 0.5H5L2.5 3.5Z" fill="#222"/></svg>
<div class="a" style="left:1103px;top:64px;width:1px;height:14px;background:#c9c9c9"></div>
<div class="a" style="left:1107px;top:61px;width:19px;height:19px;background:linear-gradient(#e8f4ff,#cde5fb);border:1px solid #79aee3"></div>
<svg class="a" style="left:1110px;top:64px" width="14" height="14" viewBox="0 0 14 14"><ellipse cx="7" cy="7" rx="5.5" ry="5" fill="#3a70e0" stroke="#1a2a70" stroke-width="1.2"/><path d="M1 2L13 13" stroke="#111" stroke-width="1.5"/><path d="M3 6Q7 3 11 7" stroke="#aee" fill="none"/></svg>
<div class="a" style="left:1128px;top:64px;width:1px;height:14px;background:#c9c9c9"></div>
<svg class="a" style="left:1134px;top:64px" width="14" height="14" viewBox="0 0 14 14"><path d="M2 2H11V12H2Z M4 2V0.5H9V2 M5 6H9V10H5Z" fill="#eee" stroke="#b4b4b4" stroke-width="1.1"/></svg>
<div class="a" style="left:1154px;top:64px;width:1px;height:14px;background:#c9c9c9"></div>
<svg class="a" style="left:1159px;top:64px" width="14" height="14" viewBox="0 0 14 14"><rect x="0.7" y="0.7" width="12.6" height="3" fill="#111"/><rect x="9" y="0.7" width="4" height="12.6" fill="#fff" stroke="#111" stroke-width="1.2"/><path d="M9.5 4H12.5M9.5 7H12.5M9.5 10H12.5" stroke="#111"/><rect x="0.7" y="9" width="6" height="4.5" fill="#111"/><path d="M3 3V9" stroke="#111" stroke-dasharray="1 1"/></svg>
<svg class="a" style="left:1178px;top:64px" width="14" height="14" viewBox="0 0 14 14"><rect x="0.7" y="0.7" width="11" height="9" fill="#fff" stroke="#1a2a90" stroke-width="1.2"/><rect x="0.7" y="0.7" width="11" height="2.5" fill="#1a2a90"/><path d="M6 10Q6 6 10 6Q13 6 13 9M13 9Q13 13 9 13" stroke="#1a5ae0" stroke-width="1.6" fill="none"/></svg>
<div class="a" style="left:22px;top:100px;width:212px;height:827px;background:#ececec"></div>
<div class="a" style="left:24px;top:100px;width:1px;height:827px;background:#a9b1bf"></div>
<div class="a" style="left:25px;top:100px;width:2px;height:827px;background:#eef1f6"></div>
<div class="a" style="left:229px;top:100px;width:1px;height:827px;background:#b4b4b4"></div>
<div class="a" style="left:230px;top:100px;width:4px;height:827px;background:#eaeaea"></div>
<div class="a" style="left:25px;top:100px;width:204px;height:18px;background:linear-gradient(#ffffff,#f7f7f7 45%,#e4e4e4)"></div>
<div class="a" style="left:27.5px;top:104px;font-size:10.2px;color:#3c3c3c;white-space:nowrap">Дерево модели</div>
<svg class="a" style="left:204px;top:105px" width="9" height="10"><path d="M2.5 0.5 H6.5 V5.5 H8 V6.5 H1 V5.5 H2.5 Z" fill="#111"/><path d="M4.5 6.5 V9.5" stroke="#555" stroke-width="1"/></svg>
<svg class="a" style="left:217px;top:105px" width="9" height="9"><path d="M1 1 L8 8 M8 1 L1 8" stroke="#111" stroke-width="1.6"/></svg>
<div class="a" style="left:25px;top:118px;width:204px;height:21px;background:linear-gradient(#ffffff,#f8f8f8 40%,#e0e0e0)"></div>
<svg class="a" style="left:30px;top:122px" width="10" height="13"><path d="M1.5 1 V11.5 H4 M1.5 4 H5 M1.5 8 H5" stroke="#111" stroke-width="1.3" fill="none"/><rect x="5" y="3" width="3.5" height="2.5" fill="#111"/><rect x="5" y="7" width="3.5" height="2.5" fill="#111"/><rect x="3.5" y="10.5" width="3" height="2" fill="#111"/><circle cx="1.5" cy="1.5" r="1.3" fill="#111"/></svg>
<svg class="a" style="left:49px;top:122px" width="13" height="13"><path d="M1 1.5 H4 M1 1.5 V11.5 H4 M1 6.5 H4 M5.5 4 L8 6.5 L5.5 9 M9 4 H12 M9 6.5 H12 M9 9 H12" stroke="#b5b5b5" stroke-width="1" fill="none"/></svg>
<svg class="a" style="left:66px;top:127px" width="6" height="4"><path d="M0.5 0.5 H5.5 L3 3.5 Z" fill="#999"/></svg>
<div class="a" style="left:76px;top:122px;width:1px;height:14px;background:#cfcfcf"></div>
<div class="a" style="left:80px;top:119px;width:18px;height:19px;background:linear-gradient(#e6f3ff,#cfe6fb);border:1px solid #7aaee0"></div>
<svg class="a" style="left:84px;top:122px" width="9" height="13"><rect x="0.8" y="0.8" width="7.4" height="11.4" fill="#fff" stroke="#0b1f8a" stroke-width="1.4"/><rect x="2.5" y="2.5" width="2" height="2.5" fill="#0b1f8a"/><rect x="2" y="7.5" width="5" height="3" fill="#0b1f8a"/></svg>
<svg class="a" style="left:101px;top:122px" width="13" height="13"><path d="M1.5 1.5 H8 V12 H1.5 Z M3 3.5 H6.5 M3 5.5 H6.5 M3 7.5 H6.5 M3 9.5 H6.5 M9 4 H12 V10 H9" stroke="#c4c4c4" stroke-width="1" fill="#f0f0f0"/></svg>
<div class="a" style="left:25px;top:139px;width:204px;height:1px;background:#c0c0c0"></div>
<div class="a" style="left:25px;top:140px;width:204px;height:2px;background:#f6f6f6"></div>
<div class="a" style="left:27px;top:142px;width:200px;height:1px;background:#b8b8b8"></div>
<div class="a" style="left:226px;top:142px;width:1px;height:536px;background:#b8b8b8"></div>
<div class="a" style="left:211px;top:143px;width:15px;height:521px;background:linear-gradient(90deg,#ececec,#f6f6f6 50%,#ececec)"></div>
<svg class="a" style="left:214px;top:148px" width="9" height="6"><path d="M1 5 L4.5 1.5 L8 5 Z" fill="#333"/></svg>
<svg class="a" style="left:214px;top:653px" width="9" height="6"><path d="M1 1 L4.5 4.5 L8 1 Z" fill="#333"/></svg>
<div class="a" style="left:212px;top:158px;width:13px;height:75px;background:linear-gradient(90deg,#dcdcdc,#f4f4f4 40%,#d0d0d0);border:1px solid #b0b0b0;border-radius:2px"></div>
<div class="a" style="left:215px;top:192px;width:7px;height:5px;border-top:1px solid #777;border-bottom:1px solid #777"></div>
<div class="a" style="left:215px;top:194px;width:7px;height:1px;background:#777"></div>
<div class="a" style="left:27px;top:663px;width:200px;height:15px;background:#ececec"></div>
<div class="a" style="left:44px;top:664px;width:129px;height:13px;background:linear-gradient(#f4f4f4,#e8e8e8 50%,#d4d4d4);border:1px solid #b4b4b4;border-radius:2px"></div>
<div class="a" style="left:105px;top:667px;width:6px;height:7px;border-left:1px solid #666;border-right:1px solid #666"></div>
<div class="a" style="left:108px;top:667px;width:1px;height:7px;background:#666"></div>
<svg class="a" style="left:33px;top:666px" width="6" height="9"><path d="M5 1 L1.5 4.5 L5 8 Z" fill="#333"/></svg>
<svg class="a" style="left:200px;top:666px" width="6" height="9"><path d="M1 1 L4.5 4.5 L1 8 Z" fill="#333"/></svg>
<div class="a" style="left:27px;top:677px;width:200px;height:1px;background:#b4b4b4"></div>
<div class="a" style="left:25px;top:679px;width:204px;height:2px;background:#a8a8a8;border-bottom:1px solid #fff"></div>
<div class="a" style="left:27px;top:681px;width:200px;height:224px;background:#efefef;border:1px solid #bcbcbc;border-top:none"></div>
<div class="a" style="left:25px;top:905px;width:204px;height:2px;background:#a4a4a4"></div>
<div class="a" style="left:25px;top:907px;width:204px;height:19px;background:linear-gradient(#fafafa,#f0f0f0 60%,#dcdcdc)"></div>
<div class="a" style="left:26px;top:906px;width:68px;height:17px;background:#ffffff;border-right:1px solid #555;border-bottom:1px solid #555"></div>
<div class="a" style="left:31px;top:909px;font-size:10.3px;color:#333;white-space:nowrap">Построение</div>

<div class="a" style="left:27px;top:143px;width:184px;height:520px;overflow:hidden;background:#fff">
<div class="a" style="left:23px;top:1px;width:92px;height:16px;background:#f0f0f0"></div>
<div class="a" style="left:13px;top:17px;width:1px;height:520px;border-left:1px dotted #8a8a8a"></div>
<div class="a" style="left:9px;top:22px;width:8px;height:8px;border:1px solid #b8bcc4;background:linear-gradient(#fff,#e4e6ea)"></div>
<div class="a" style="left:11px;top:25.5px;width:4px;height:1px;background:#333"></div>
<div class="a" style="left:12.5px;top:24px;width:1px;height:4px;background:#333"></div>
<svg class="a" style="left:6px;top:1.5px" width="15" height="15"><use href="#i-root"/></svg>
<div class="tt a" style="left:25.5px;top:3.0px">Корпус_ВВ3 (Тел-2)</div>
<div class="a" style="left:18px;top:25.7px;width:6px;height:1px;border-top:1px dotted #8a8a8a"></div>
<svg class="a" style="left:25px;top:18.7px" width="15" height="15"><use href="#i-axes"/></svg>
<div class="tt a" style="left:45px;top:19.7px">(т) Начало координат</div>
<div class="a" style="left:14px;top:42.3px;width:10px;height:1px;border-top:1px dotted #8a8a8a"></div>
<svg class="a" style="left:25px;top:35.3px" width="15" height="15"><use href="#i-sk"/></svg>
<div class="tt a" style="left:45px;top:36.3px">(-)&nbsp; Эскиз:1</div>
<div class="a" style="left:14px;top:59.0px;width:10px;height:1px;border-top:1px dotted #8a8a8a"></div>
<svg class="a" style="left:25px;top:52.0px" width="15" height="15"><use href="#i-ex1"/></svg>
<div class="tt a" style="left:47.5px;top:53.0px">Операция выдавливания:1</div>
<div class="a" style="left:14px;top:75.7px;width:10px;height:1px;border-top:1px dotted #8a8a8a"></div>
<svg class="a" style="left:25px;top:68.7px" width="15" height="15"><use href="#i-sk"/></svg>
<div class="tt a" style="left:45px;top:69.7px">(-)&nbsp; Эскиз:2</div>
<div class="a" style="left:14px;top:92.3px;width:10px;height:1px;border-top:1px dotted #8a8a8a"></div>
<svg class="a" style="left:25px;top:85.3px" width="15" height="15"><use href="#i-ex2"/></svg>
<div class="tt a" style="left:47.5px;top:86.3px">Операция выдавливания:2</div>
<div class="a" style="left:14px;top:109.0px;width:10px;height:1px;border-top:1px dotted #8a8a8a"></div>
<svg class="a" style="left:25px;top:102.0px" width="15" height="15"><use href="#i-sk"/></svg>
<div class="tt a" style="left:45px;top:103.0px">(-)&nbsp; Эскиз:3</div>
<div class="a" style="left:14px;top:125.7px;width:10px;height:1px;border-top:1px dotted #8a8a8a"></div>
<svg class="a" style="left:25px;top:118.7px" width="15" height="15"><use href="#i-ex2"/></svg>
<div class="tt a" style="left:47.5px;top:119.7px">Операция выдавливания:3</div>
<div class="a" style="left:14px;top:142.3px;width:10px;height:1px;border-top:1px dotted #8a8a8a"></div>
<svg class="a" style="left:25px;top:135.3px" width="15" height="15"><use href="#i-fil"/></svg>
<div class="tt a" style="left:47.5px;top:136.3px">Скругление:1</div>
<div class="a" style="left:14px;top:159.0px;width:10px;height:1px;border-top:1px dotted #8a8a8a"></div>
<svg class="a" style="left:25px;top:152.0px" width="15" height="15"><use href="#i-sk"/></svg>
<div class="tt a" style="left:45px;top:153.0px">(-)&nbsp; Эскиз:4</div>
<div class="a" style="left:14px;top:175.7px;width:10px;height:1px;border-top:1px dotted #8a8a8a"></div>
<svg class="a" style="left:25px;top:168.7px" width="15" height="15"><use href="#i-cut"/></svg>
<div class="tt a" style="left:47.5px;top:169.7px">Вырезать элемент выдавливания</div>
<div class="a" style="left:14px;top:192.3px;width:10px;height:1px;border-top:1px dotted #8a8a8a"></div>
<svg class="a" style="left:25px;top:185.3px" width="15" height="15"><use href="#i-sk"/></svg>
<div class="tt a" style="left:45px;top:186.3px">(-)&nbsp; Эскиз:5</div>
<div class="a" style="left:14px;top:209.0px;width:10px;height:1px;border-top:1px dotted #8a8a8a"></div>
<svg class="a" style="left:25px;top:202.0px" width="15" height="15"><use href="#i-cut"/></svg>
<div class="tt a" style="left:47.5px;top:203.0px">Вырезать элемент выдавливания</div>
<div class="a" style="left:14px;top:225.7px;width:10px;height:1px;border-top:1px dotted #8a8a8a"></div>
<svg class="a" style="left:25px;top:218.7px" width="15" height="15"><use href="#i-ch"/></svg>
<div class="tt a" style="left:47.5px;top:219.7px">Фаска:1</div>
<div class="a" style="left:14px;top:242.3px;width:10px;height:1px;border-top:1px dotted #8a8a8a"></div>
<svg class="a" style="left:25px;top:235.3px" width="15" height="15"><use href="#i-sk"/></svg>
<div class="tt a" style="left:47.5px;top:236.3px">Эскиз:8</div>
<div class="a" style="left:14px;top:259.0px;width:10px;height:1px;border-top:1px dotted #8a8a8a"></div>
<svg class="a" style="left:25px;top:252.0px" width="15" height="15"><use href="#i-cut"/></svg>
<div class="tt a" style="left:47.5px;top:253.0px">Вырезать элемент выдавливания</div>
<div class="a" style="left:14px;top:275.7px;width:10px;height:1px;border-top:1px dotted #8a8a8a"></div>
<svg class="a" style="left:25px;top:268.7px" width="15" height="15"><use href="#i-sk"/></svg>
<div class="tt a" style="left:47.5px;top:269.7px">Эскиз:9</div>
<div class="a" style="left:14px;top:292.3px;width:10px;height:1px;border-top:1px dotted #8a8a8a"></div>
<svg class="a" style="left:25px;top:285.3px" width="15" height="15"><use href="#i-ex2"/></svg>
<div class="tt a" style="left:47.5px;top:286.3px">Операция выдавливания:4</div>
<div class="a" style="left:14px;top:309.0px;width:10px;height:1px;border-top:1px dotted #8a8a8a"></div>
<svg class="a" style="left:25px;top:302.0px" width="15" height="15"><use href="#i-sk"/></svg>
<div class="tt a" style="left:47.5px;top:303.0px">Эскиз:10</div>
<div class="a" style="left:14px;top:325.7px;width:10px;height:1px;border-top:1px dotted #8a8a8a"></div>
<svg class="a" style="left:25px;top:318.7px" width="15" height="15"><use href="#i-cut"/></svg>
<div class="tt a" style="left:47.5px;top:319.7px">Вырезать элемент выдавливания</div>
<div class="a" style="left:14px;top:342.3px;width:10px;height:1px;border-top:1px dotted #8a8a8a"></div>
<svg class="a" style="left:25px;top:335.3px" width="15" height="15"><use href="#i-ch"/></svg>
<div class="tt a" style="left:47.5px;top:336.3px">Фаска:2</div>
<div class="a" style="left:14px;top:359.0px;width:10px;height:1px;border-top:1px dotted #8a8a8a"></div>
<svg class="a" style="left:25px;top:352.0px" width="15" height="15"><use href="#i-sk"/></svg>
<div class="tt a" style="left:47.5px;top:353.0px">Эскиз:11</div>
<div class="a" style="left:14px;top:375.7px;width:10px;height:1px;border-top:1px dotted #8a8a8a"></div>
<svg class="a" style="left:25px;top:368.7px" width="15" height="15"><use href="#i-cut"/></svg>
<div class="tt a" style="left:47.5px;top:369.7px">Вырезать элемент выдавливания</div>
<div class="a" style="left:14px;top:392.3px;width:10px;height:1px;border-top:1px dotted #8a8a8a"></div>
<svg class="a" style="left:25px;top:385.3px" width="15" height="15"><use href="#i-sk"/></svg>
<div class="tt a" style="left:47.5px;top:386.3px">Эскиз:12</div>
<div class="a" style="left:14px;top:409.0px;width:10px;height:1px;border-top:1px dotted #8a8a8a"></div>
<svg class="a" style="left:25px;top:402.0px" width="15" height="15"><use href="#i-cut"/></svg>
<div class="tt a" style="left:47.5px;top:403.0px">Вырезать элемент выдавливания</div>
<div class="a" style="left:14px;top:425.7px;width:10px;height:1px;border-top:1px dotted #8a8a8a"></div>
<svg class="a" style="left:25px;top:418.7px" width="15" height="15"><use href="#i-thr"/></svg>
<div class="tt a" style="left:47.5px;top:419.7px">Условное изображение резьбы</div>
<div class="a" style="left:14px;top:442.3px;width:10px;height:1px;border-top:1px dotted #8a8a8a"></div>
<svg class="a" style="left:25px;top:435.3px" width="15" height="15"><use href="#i-ch"/></svg>
<div class="tt a" style="left:47.5px;top:436.3px">Фаска:3</div>
<div class="a" style="left:14px;top:459.0px;width:10px;height:1px;border-top:1px dotted #8a8a8a"></div>
<svg class="a" style="left:25px;top:452.0px" width="15" height="15"><use href="#i-sk"/></svg>
<div class="tt a" style="left:47.5px;top:453.0px">Эскиз:13</div>
<div class="a" style="left:14px;top:475.7px;width:10px;height:1px;border-top:1px dotted #8a8a8a"></div>
<svg class="a" style="left:25px;top:468.7px" width="15" height="15"><use href="#i-cut"/></svg>
<div class="tt a" style="left:47.5px;top:469.7px">Вырезать элемент выдавливания</div>
<div class="a" style="left:14px;top:492.3px;width:10px;height:1px;border-top:1px dotted #8a8a8a"></div>
<svg class="a" style="left:25px;top:485.3px" width="15" height="15"><use href="#i-sk"/></svg>
<div class="tt a" style="left:47.5px;top:486.3px">Эскиз:14</div>
<div class="a" style="left:14px;top:509.0px;width:10px;height:1px;border-top:1px dotted #8a8a8a"></div>
<svg class="a" style="left:25px;top:502.0px" width="15" height="15"><use href="#i-ex2"/></svg>
<div class="tt a" style="left:47.5px;top:503.0px">Операция выдавливания:5</div>
<div class="a" style="left:14px;top:525.7px;width:10px;height:1px;border-top:1px dotted #8a8a8a"></div>
<svg class="a" style="left:25px;top:518.7px" width="15" height="15"><use href="#i-sk"/></svg>
</div>
<div id="viewport" class="a"></div>
<svg class="a" style="left:0;top:0" width="1600" height="1000" viewBox="0 0 1600 1000">
<defs>
<pattern id="dots" width="3" height="3" patternUnits="userSpaceOnUse"><circle cx="1.5" cy="1.5" r=".75" fill="#222"/></pattern>
<pattern id="grid" width="3" height="3" patternUnits="userSpaceOnUse"><rect x="0" y="0" width="3" height=".6" fill="#8a94a0" opacity=".18"/><rect x="0" y="0" width=".6" height="3" fill="#8a94a0" opacity=".18"/></pattern>
<linearGradient id="cyl" x1="0" x2="1" y1="0" y2="0"><stop offset="0" stop-color="#b8b8b8"/><stop offset=".2" stop-color="#f6f6f6"/><stop offset=".6" stop-color="#fcfcfc"/><stop offset="1" stop-color="#b0b0b0"/></linearGradient>
<linearGradient id="shaft" x1="0" x2="1"><stop offset="0" stop-color="#b4bcc4"/><stop offset=".4" stop-color="#f2f6f8"/><stop offset="1" stop-color="#bcc4cc"/></linearGradient>
<linearGradient id="cream" x1="0" x2="1"><stop offset="0" stop-color="#e2dfc8"/><stop offset=".4" stop-color="#f8f6e4"/><stop offset="1" stop-color="#dcd8c0"/></linearGradient>
<linearGradient id="cone" x1="0" x2="1"><stop offset="0" stop-color="#e4e8ee" stop-opacity=".85"/><stop offset=".5" stop-color="#fafbfd" stop-opacity=".7"/><stop offset="1" stop-color="#dde2ea" stop-opacity=".85"/></linearGradient>
<g id="pole">
</g>
</defs>
<!-- poles: drawn back (right) to front (left) -->
<!-- RIGHT POLE C -->
<g>
 <!-- cone -->
 <path d="M886 662 L878 780 A28.5 10 0 0 0 935 780 L927 662 Z" fill="url(#cone)" stroke="#333" stroke-width="1"/>
 <path d="M886 662 L878 780 A28.5 10 0 0 0 935 780 L927 662 Z" fill="url(#grid)"/>
 <ellipse cx="906.5" cy="780" rx="28.5" ry="9.5" fill="none" stroke="#222" stroke-width="1.3"/>
 <path d="M886 666 Q906.5 673 927 666" fill="none" stroke="#333" stroke-width="1"/><ellipse cx="906.5" cy="782" rx="26" ry="8" fill="none" stroke="#555" stroke-width=".7"/><rect x="902" y="663" width="11" height="62" fill="#c9785a" stroke="#6a3a1e" stroke-width=".8"/><circle cx="907.5" cy="716" r="2" fill="#f0e0d0" stroke="#5a2a10" stroke-width=".6"/>
 <!-- black cyl -->
 <rect x="928" y="576" width="5" height="48" fill="#b8b8b0" stroke="#555" stroke-width=".6"/>
 <rect x="886" y="600" width="42" height="62" fill="#1c1c1c"/>
 <path d="M885 571 V604 Q907 612 929 604 V571 Z" fill="url(#cream)" stroke="#333" stroke-width=".8"/>
 <ellipse cx="907" cy="571" rx="22" ry="6" fill="#f5f3e2" stroke="#444" stroke-width=".8"/>
 <!-- coupling -->
 <rect x="903" y="490" width="21" height="36" fill="url(#shaft)" stroke="#333" stroke-width=".8"/>
 <rect x="912" y="556" width="12" height="15" fill="#9a9a96" stroke="#333" stroke-width=".6"/><rect x="900" y="523" width="27" height="37" fill="#1e1e1e" rx="2"/><path d="M901 538 H926 M913 550 L926 539" stroke="#3a3a3a" stroke-width="1" fill="none"/>
 <rect x="903" y="555" width="9" height="12" fill="#1a1a1a"/>
 <path d="M895 475 H932 V481 Q932 483 927 484 V491 H901 V484 Q895 483 895 481 Z" fill="#1c1c1c"/>
 <!-- lower body -->
 <path d="M890 422 H939 V470 Q914 482 890 470 Z" fill="url(#cyl)" stroke="#222" stroke-width="1"/>
 <path d="M890 422 H939 V470 Q914 482 890 470 Z" fill="url(#dots)" opacity=".4"/>
 <!-- skirt -->
 <path d="M884 408 H950 L940 430 H890 Z" fill="#e8e8e8" stroke="#222" stroke-width="1"/>
 <g fill="none" stroke="#1a1a1a" stroke-width="1"><path d="M892.7 412 L894 427 L895.3 412"/><path d="M901.7 412 L903 430 L904.3 412"/><path d="M910.7 412 L912 430 L913.3 412"/><path d="M919.7 412 L921 430 L922.3 412"/><path d="M928.7 412 L930 430 L931.3 412"/><path d="M936.7 412 L938 427 L939.3 412"/></g>
 <!-- upper body -->
 <path d="M885 314 H948 V410 Q916 418 885 410 Z" fill="url(#cyl)" stroke="#222" stroke-width="1"/>
 <path d="M885 314 H948 V410 Q916 418 885 410 Z" fill="url(#dots)" opacity=".4"/>
 <g fill="none" stroke="#111" stroke-width="2.3">
  <path d="M884 337 Q916 345 949 337"/><path d="M883 346 Q916 354 950 346"/><path d="M883 355 Q916 363 950 355"/><path d="M883 364 Q916 372 950 364"/><path d="M884 373 Q916 381 949 373"/><path d="M885 400 Q916 408 948 400"/>
 </g>
 <g fill="#f0f0f0" stroke="#222" stroke-width="1"><rect x="898" y="314" width="11" height="20"/><path d="M903.5 314 V334" fill="none"/></g><g fill="#f0f0f0" stroke="#222" stroke-width="1"><rect x="945" y="306" width="7" height="26"/><path d="M948.5 306 V332" fill="none"/></g>
 <circle cx="934" cy="392" r="16.5" fill="#1a1a1a"/><ellipse cx="926" cy="392" rx="10" ry="15" fill="#2a2a2a"/>
</g>
<!-- MIDDLE POLE B -->
<g>
 <path d="M823 672 L815 792 A29 10 0 0 0 873 792 L865 672 Z" fill="url(#cone)" stroke="#333" stroke-width="1"/>
 <path d="M823 672 L815 792 A29 10 0 0 0 873 792 L865 672 Z" fill="url(#grid)"/>
 <ellipse cx="844" cy="792" rx="29" ry="9.5" fill="none" stroke="#222" stroke-width="1.3"/>
 <path d="M823 677 Q844 684 865 677" fill="none" stroke="#333" stroke-width="1"/><ellipse cx="844" cy="794" rx="26.5" ry="8" fill="none" stroke="#555" stroke-width=".7"/><rect x="838" y="674" width="12" height="62" fill="#c9785a" stroke="#6a3a1e" stroke-width=".8"/><circle cx="844" cy="727" r="2" fill="#f0e0d0" stroke="#5a2a10" stroke-width=".6"/>
 <rect x="865" y="586" width="6" height="48" fill="#b8b8b0" stroke="#555" stroke-width=".6"/>
 <rect x="822" y="610" width="43" height="62" fill="#1c1c1c"/>
 <path d="M821 580 V614 Q843 622 866 614 V580 Z" fill="url(#cream)" stroke="#333" stroke-width=".8"/>
 <ellipse cx="843.5" cy="580" rx="22.5" ry="6" fill="#f5f3e2" stroke="#444" stroke-width=".8"/>
 <rect x="840" y="498" width="22" height="38" fill="url(#shaft)" stroke="#333" stroke-width=".8"/>
 <rect x="848" y="565" width="14" height="16" fill="#9a9a96" stroke="#333" stroke-width=".6"/><rect x="837" y="532" width="28" height="37" fill="#1e1e1e" rx="2"/><path d="M838 547 H864 M850 559 L864 548" stroke="#3a3a3a" stroke-width="1" fill="none"/>
 <rect x="839" y="566" width="9" height="14" fill="#1a1a1a"/>
 <path d="M836 483 H869 V489 Q869 491 865 492 V498 H842 V492 Q836 491 836 489 Z" fill="#1c1c1c"/>
 <path d="M826 428 H876 V476 Q851 490 826 476 Z" fill="url(#cyl)" stroke="#222" stroke-width="1"/>
 <path d="M826 428 H876 V476 Q851 490 826 476 Z" fill="url(#dots)" opacity=".4"/>
 <path d="M819 416 H886 L876 440 H826 Z" fill="#e8e8e8" stroke="#222" stroke-width="1"/>
 <g fill="none" stroke="#1a1a1a" stroke-width="1"><path d="M828.7 420 L830 437 L831.3 420"/><path d="M837.7 420 L839 440 L840.3 420"/><path d="M846.7 420 L848 440 L849.3 420"/><path d="M855.7 420 L857 440 L858.3 420"/><path d="M864.7 420 L866 440 L867.3 420"/><path d="M872.7 420 L874 437 L875.3 420"/></g>
 <path d="M820 320 H885 V418 Q852 426 820 418 Z" fill="url(#cyl)" stroke="#222" stroke-width="1"/>
 <path d="M820 320 H885 V418 Q852 426 820 418 Z" fill="url(#dots)" opacity=".4"/>
 <g fill="none" stroke="#111" stroke-width="2.3">
  <path d="M819 343 Q852 351 886 343"/><path d="M818 352 Q852 360 887 352"/><path d="M818 361 Q852 369 887 361"/><path d="M818 370 Q852 378 887 370"/><path d="M819 379 Q852 387 886 379"/><path d="M820 408 Q852 416 885 408"/>
 </g>
 <g fill="#f0f0f0" stroke="#222" stroke-width="1"><rect x="834" y="318" width="12" height="21"/><path d="M840.0 318 V339" fill="none"/></g>
 <circle cx="870" cy="399" r="16.5" fill="#1a1a1a"/><ellipse cx="861" cy="399" rx="10" ry="15" fill="#2a2a2a"/>
</g>
<!-- LEFT POLE A -->
<g>
 <path d="M757 684 L750 805 A30 10 0 0 0 810 805 L801 684 Z" fill="url(#cone)" stroke="#333" stroke-width="1"/>
 <path d="M757 684 L750 805 A30 10 0 0 0 810 805 L801 684 Z" fill="url(#grid)"/>
 <ellipse cx="780" cy="805" rx="30" ry="10" fill="none" stroke="#222" stroke-width="1.3"/>
 <path d="M757 689 Q779 696 801 689" fill="none" stroke="#333" stroke-width="1"/><ellipse cx="780" cy="807" rx="27.5" ry="8.5" fill="none" stroke="#555" stroke-width=".7"/><rect x="773" y="686" width="13" height="62" fill="#c9785a" stroke="#6a3a1e" stroke-width=".8"/><circle cx="779.5" cy="739" r="2" fill="#f0e0d0" stroke="#5a2a10" stroke-width=".6"/>
 <rect x="800" y="596" width="7" height="48" fill="#b8b8b0" stroke="#555" stroke-width=".6"/>
 <rect x="756" y="622" width="45" height="62" fill="#1c1c1c"/>
 <path d="M755 590 V625 Q778 633 801 625 V590 Z" fill="url(#cream)" stroke="#333" stroke-width=".8"/>
 <ellipse cx="778" cy="590" rx="23" ry="6.5" fill="#f5f3e2" stroke="#444" stroke-width=".8"/>
 <rect x="776" y="506" width="22" height="36" fill="url(#shaft)" stroke="#333" stroke-width=".8"/>
 <rect x="782" y="574" width="15" height="17" fill="#9a9a96" stroke="#333" stroke-width=".6"/><rect x="772" y="540" width="29" height="38" fill="#1e1e1e" rx="2"/><path d="M773 556 H800 M786 568 L800 557" stroke="#3a3a3a" stroke-width="1" fill="none"/>
 <rect x="773" y="575" width="9" height="15" fill="#1a1a1a"/>
 <path d="M766 490 H806 V496 Q806 498 801 499 V507 H772 V499 Q766 498 766 496 Z" fill="#1c1c1c"/>
 <path d="M760 438 H812 V482 Q786 496 760 482 Z" fill="url(#cyl)" stroke="#222" stroke-width="1"/>
 <path d="M760 438 H812 V482 Q786 496 760 482 Z" fill="url(#dots)" opacity=".4"/>
 <path d="M751 424 H822 L812 448 H760 Z" fill="#e8e8e8" stroke="#222" stroke-width="1"/>
 <g fill="none" stroke="#1a1a1a" stroke-width="1"><path d="M760.7 428 L762 445 L763.3 428"/><path d="M769.7 428 L771 448 L772.3 428"/><path d="M779.7 428 L781 448 L782.3 428"/><path d="M789.7 428 L791 448 L792.3 428"/><path d="M798.7 428 L800 448 L801.3 428"/><path d="M807.7 428 L809 445 L810.3 428"/></g>
 <path d="M750 326 H820 V426 Q785 434 750 426 Z" fill="url(#cyl)" stroke="#222" stroke-width="1"/>
 <path d="M750 326 H820 V426 Q785 434 750 426 Z" fill="url(#dots)" opacity=".4"/>
 <g fill="none" stroke="#111" stroke-width="2.3">
  <path d="M749 346 Q785 354 821 346"/><path d="M748 355 Q785 363 822 355"/><path d="M748 364 Q785 372 822 364"/><path d="M748 373 Q785 381 822 373"/><path d="M749 382 Q785 390 821 382"/><path d="M750 418 Q785 426 820 418"/>
 </g>
 <g fill="#f0f0f0" stroke="#222" stroke-width="1"><rect x="767" y="325" width="12" height="20"/><path d="M773.0 325 V345" fill="none"/></g><g fill="#f0f0f0" stroke="#222" stroke-width="1"><rect x="743" y="322" width="7" height="16"/><path d="M746.5 322 V338" fill="none"/></g>
 <circle cx="805" cy="405" r="16.5" fill="#1a1a1a"/><ellipse cx="796" cy="405" rx="10" ry="15" fill="#2a2a2a"/>
</g>
<!-- HOUSING -->
<g>
 <polygon points="718,214 930,200 978,208 762,226" fill="#bab9af" stroke="#222" stroke-width="1.2"/>
 <polygon points="762,226 978,208 978,258 766,273" fill="#8e8d86" stroke="#222" stroke-width="1"/>
 <polygon points="766,273 978,258 980,307 762,324" fill="#94938c" stroke="#222" stroke-width="1"/>
 <path d="M971 208 H976 Q980 209 980 213 V259 L971 260 Z" fill="#1a1a1a"/>
 <polygon points="766,272 979,258 979,264 766,279" fill="#aaa9a1" stroke="#2a2a2a" stroke-width=".8"/>
 <path d="M719 214 L766 224 L766 323 L722 313 Q718 311 718 306 V218 Q718 215 719 214 Z" fill="#2a2a2a" stroke="#0c0c0c" stroke-width="2.2"/>
 <polygon points="758,223 768,225 768,325 758,323" fill="#141414"/>
 <polygon points="798,288 872,283 873,311 799,316" fill="#141414"/>
 <polygon points="876,281 948,277 948,303 877,307" fill="#141414"/>
 <ellipse cx="835" cy="280" rx="13" ry="5.5" fill="#1a1a1a"/><circle cx="836" cy="280" r="2" fill="#eee"/>
 <ellipse cx="911" cy="273" rx="13" ry="5.5" fill="#1a1a1a"/><circle cx="911" cy="273" r="2" fill="#eee"/>
 <circle cx="962" cy="277" r="8" fill="#9d9c94" stroke="#222" stroke-width="1.2"/>
 <path d="M957 297 L960 287 L963 297 Z" fill="none" stroke="#333" stroke-width="1"/>
 <rect x="714" y="228" width="26" height="12" rx="4" fill="#c8952c" stroke="#5a3e08" stroke-width=".8"/>
 <rect x="705" y="250" width="24" height="13" rx="4" fill="#c8952c" stroke="#5a3e08" stroke-width=".8"/>
 <rect x="693" y="254" width="13" height="6" fill="#c8952c" stroke="#5a3e08" stroke-width=".6"/>
 <circle cx="749" cy="262" r="4" fill="#8a6a1a"/>
</g>
</svg>

<svg class="a" style="left:1px;top:1px" width="15" height="15"><circle cx="7.5" cy="7.5" r="6.8" fill="#3a7ad0" stroke="#1a3a80" stroke-width=".8"/><circle cx="7.5" cy="7.5" r="4.6" fill="#dce8f6"/><path d="M5.5 4V11M5.5 7.5L9.5 4M5.5 7.5L9.5 11" stroke="#1a4aa0" stroke-width="1.6" fill="none"/></svg>
<div class="a" style="left:1512px;top:0;width:24px;height:15px;border:1px solid #3a4a5e;border-top:none;border-right:none;border-radius:0 0 0 4px;background:linear-gradient(#d8e2ee,#b8c8dc 45%,#8aa4c4 50%,#a8bcd6)"></div>
<div class="a" style="left:1520px;top:7px;width:8px;height:3px;background:#fff;border:1px solid #445"></div>
<div class="a" style="left:1536px;top:0;width:21px;height:15px;border-bottom:1px solid #3a4a5e;border-left:1px solid #3a4a5e;background:linear-gradient(#d8e2ee,#b8c8dc 45%,#8aa4c4 50%,#a8bcd6)"></div>
<div class="a" style="left:1542px;top:3px;width:8px;height:8px;background:#fff;border:1px solid #445"></div><div class="a" style="left:1544px;top:5px;width:4px;height:4px;background:#556"></div>
<div class="a" style="left:1557px;top:0;width:40px;height:15px;border:1px solid #5a2a2a;border-top:none;border-radius:0 0 4px 0;background:linear-gradient(#e8a898,#d87868 45%,#c0281a 50%,#d85a40)"></div>
<svg class="a" style="left:1572px;top:2px" width="10" height="10"><path d="M1.5 1.5L8.5 8.5M8.5 1.5L1.5 8.5" stroke="#fff" stroke-width="2.6"/><path d="M1.5 1.5L8.5 8.5M8.5 1.5L1.5 8.5" stroke="#fff" stroke-width="1.6"/></svg>
<div class="a" style="left:16px;top:81px;width:1584px;height:1px;background:#b4b4b4"></div>
<div class="a" style="left:22px;top:82px;width:1578px;height:18px;background:linear-gradient(#f4f4f4,#e6e6e6 70%,#f2f2f2)"></div>
<div class="a" style="left:21px;top:82px;width:1px;height:850px;background:#b8b8b8"></div>
<div class="a" style="left:22px;top:99px;width:16px;height:1px;background:#b0b0b0"></div>
<svg class="a" style="left:25px;top:86px" width="8" height="9"><path d="M6.5 0.5V8L1 4.25Z" fill="none" stroke="#111" stroke-width="1.3"/></svg>
<svg class="a" style="left:36px;top:82px" width="882" height="19"><defs><linearGradient id="tabg" x1="0" x2="0" y1="0" y2="1"><stop offset="0" stop-color="#ffffff"/><stop offset=".35" stop-color="#f4f7fd"/><stop offset=".55" stop-color="#d8e2f6"/><stop offset="1" stop-color="#c4d2f2"/></linearGradient></defs><path d="M0.5 18.5 L16.5 1 H880.5 V18.5" fill="url(#tabg)" stroke="#8a8e96" stroke-width="1"/></svg>
<div class="a" style="left:61px;top:84px;font-size:10.87px;font-weight:bold;color:#0a0a14;white-space:nowrap;line-height:14px">Z:\3D_ASCON\Групповое комплектное распределительное устройство\Промышленная группа КРУ-TEL-10-16-400\Вакуумный выключатель\Корпус_ВВ3.m3d</div>
<div class="a" style="left:917px;top:99px;width:683px;height:1px;background:#a8a8a8"></div>
<svg class="a" style="left:1569px;top:86px" width="6" height="9"><path d="M1 0.5V8.5L5 4.5Z" fill="none" stroke="#111" stroke-width="1.3"/></svg>
<svg class="a" style="left:1583px;top:86px" width="9" height="9"><path d="M1 1L8 8M8 1L1 8" stroke="#111" stroke-width="1.6"/></svg>
<div class="a" style="left:1599px;top:82px;width:1px;height:850px;background:#9a9a9a"></div>
<div class="a" style="left:1596px;top:101px;width:3px;height:826px;background:linear-gradient(90deg,#dfeaf6,#fbfcfe)"></div>
<div class="a" style="left:234px;top:924px;width:1366px;height:2px;background:linear-gradient(#fdfdfd,#c8c8c8)"></div>
<div class="a" style="left:0;top:87px;width:21px;height:558px;background:linear-gradient(90deg,#f4f4f4,#ffffff 30%,#f6f6f6 70%,#dedede);border-radius:3px 3px 0 0"></div>
<div class="a" style="left:0;top:634px;width:21px;height:12px;background:linear-gradient(90deg,#a8a8a8,#d4d4d4 40%,#e8e8e8);border-radius:0 0 4px 6px"></div>
<svg class="a" style="left:13px;top:636px" width="7" height="8"><path d="M1 1V7M3 1L6.5 4L3 7Z" stroke="#111" fill="#111" stroke-width=".8"/></svg>
<svg class="a" style="left:4px;top:90px" width="14" height="3"><g fill="#999"><rect x="0" y="0" width="1.5" height="1.5"/><rect x="4" y="0" width="1.5" height="1.5"/><rect x="8" y="0" width="1.5" height="1.5"/><rect x="12" y="0" width="1.5" height="1.5"/></g></svg>
<svg class="a" style="left:7px;top:95.5px" width="11" height="11" viewBox="0 0 13 13"><path d="M1 4L4 1H12L9 4Z" fill="#3ae4ff"/><path d="M9 4L12 1V9L9 12Z" fill="#1434c8"/><rect x="1" y="4" width="8" height="8" fill="#3a78f0"/></svg>
<svg class="a" style="left:7px;top:109.5px" width="11" height="11" viewBox="0 0 13 13"><path d="M4 1Q9 1 7 5Q2 8 6 11Q8 12 11 11.5" stroke="#111" stroke-width="1.3" fill="none"/></svg>
<svg class="a" style="left:7px;top:124.5px" width="11" height="11" viewBox="0 0 13 13"><path d="M1 7L6 2L12 7L7 12Z" fill="#2a6ae8" stroke="#0a2aa0"/><path d="M3.5 7L6 4.5L9.5 8" stroke="#6ae8ff" fill="none"/></svg>
<svg class="a" style="left:7px;top:139.5px" width="11" height="11" viewBox="0 0 13 13"><g fill="#2a4ae0"><circle cx="3.5" cy="3.5" r="2"/><circle cx="9.5" cy="3.5" r="2"/><circle cx="3.5" cy="9.5" r="2"/><circle cx="9.5" cy="9.5" r="2"/></g></svg>
<svg class="a" style="left:7px;top:152.5px" width="11" height="11" viewBox="0 0 13 13"><path d="M1 2L6 7" stroke="#111" stroke-width="1.2"/><path d="M3 7L7 3L12 8L8 12Z" fill="#2a7ae8" stroke="#0a2aa0"/></svg>
<svg class="a" style="left:7px;top:165.5px" width="11" height="11" viewBox="0 0 13 13"><path d="M1.5 12L6.5 1.5L11.5 12M3.5 8H9.5" stroke="#111" stroke-width="1.4" fill="none"/></svg>
<svg class="a" style="left:7px;top:179.5px" width="11" height="11" viewBox="0 0 13 13"><path d="M1 1H12L7.5 7V9H5.5V7Z" fill="#2a8ae8" stroke="#0a3aa0" stroke-width=".8"/><circle cx="6.5" cy="11" r="1.8" fill="#e02a10"/></svg>
<svg class="a" style="left:7px;top:193.5px" width="11" height="11" viewBox="0 0 13 13"><path d="M1.5 0.5H8L11.5 4V12.5H1.5Z" fill="#555" stroke="#111"/><path d="M3 4H10M3 6.5H10M3 9H10" stroke="#ccc" stroke-width=".8"/></svg>
<svg class="a" style="left:7px;top:208.5px" width="11" height="11" viewBox="0 0 13 13"><rect x="0.8" y="0.8" width="11.4" height="11.4" fill="#dce8ff" stroke="#0a1a8a" stroke-width="1.5"/><rect x="3" y="5" width="7" height="3" fill="#2a4ad0"/></svg>
<svg class="a" style="left:7px;top:221.5px" width="11" height="11" viewBox="0 0 13 13"><path d="M1 12H12M2 12L5 7L8 10L12 4" stroke="#1a3ae0" stroke-width="1.3" fill="none"/><circle cx="3" cy="2.5" r="2" fill="none" stroke="#111"/><path d="M3 4.5V9" stroke="#111"/></svg>
<div class="a" style="left:4px;top:233px;width:16px;height:16px;background:linear-gradient(#e4f2ff,#c8e2fa);border:1px solid #7aaee0"></div>
<svg class="a" style="left:7px;top:235.5px" width="11" height="11" viewBox="0 0 13 13"><path d="M2 1V11H11V7Q11 5 8 5H5V1Z" fill="#2aa8f0" stroke="#0a2a90" stroke-width="1.2"/></svg>
<div class="a" style="left:4px;top:252px;width:13px;height:1px;background:#c8c8c8"></div>
<svg class="a" style="left:7px;top:259.5px" width="11" height="11" viewBox="0 0 13 13"><path d="M2 3H10V11H2Z M0.5 5H2M0.5 9H2M10 5H12M10 9H12" fill="#ddd" stroke="#a4a4a4" stroke-width="1.2"/></svg>
<svg class="a" style="left:7px;top:278.5px" width="11" height="11" viewBox="0 0 13 13"><path d="M1 12Q1 1 6.5 1Q12 1 12 12H9Q9 5 6.5 5Q4 5 4 12Z" fill="#1a6ae0" stroke="#0a2a8a" stroke-width=".8"/><path d="M2 11Q2 3 5 2" stroke="#3ae8ff" stroke-width="1.2" fill="none"/></svg>
<div class="a" style="left:4px;top:295px;width:13px;height:1px;background:#c8c8c8"></div>
<svg class="a" style="left:7px;top:304.5px" width="11" height="11" viewBox="0 0 13 13"><path d="M1 12H9L12 8V1L9 4V9H1Z" fill="#d8d8d8" stroke="#a4a4a4" stroke-width="1.4"/><path d="M1 9L4 6H9" stroke="#a4a4a4" stroke-width="1.2" fill="none"/></svg>
<svg class="a" style="left:7px;top:321.5px" width="11" height="11" viewBox="0 0 13 13"><path d="M1 12H9L12 8V1L9 4V9H1Z" fill="#d8d8d8" stroke="#a4a4a4" stroke-width="1.4"/><path d="M1 9L4 6H9" stroke="#a4a4a4" stroke-width="1.2" fill="none"/></svg>
<svg class="a" style="left:7px;top:338.5px" width="11" height="11" viewBox="0 0 13 13"><path d="M1 12H9L12 8V1L9 4V9H1Z" fill="#d8d8d8" stroke="#a4a4a4" stroke-width="1.4"/><path d="M1 9L4 6H9" stroke="#a4a4a4" stroke-width="1.2" fill="none"/></svg>
<svg class="a" style="left:7px;top:356.5px" width="11" height="11" viewBox="0 0 13 13"><path d="M1 12H9L12 8V1L9 4V9H1Z" fill="#d8d8d8" stroke="#a4a4a4" stroke-width="1.4"/><path d="M1 9L4 6H9" stroke="#a4a4a4" stroke-width="1.2" fill="none"/></svg>
<div class="a" style="left:4px;top:377px;width:13px;height:1px;background:#c8c8c8"></div>
<svg class="a" style="left:7px;top:382.5px" width="11" height="11" viewBox="0 0 13 13"><rect x="2" y="1" width="9" height="10" fill="#d8d8d8" stroke="#a4a4a4" stroke-width="1.4"/><rect x="4" y="3" width="5" height="5" fill="none" stroke="#a4a4a4"/><path d="M1 12H11" stroke="#a4a4a4"/></svg>
<svg class="a" style="left:7px;top:400.5px" width="11" height="11" viewBox="0 0 13 13"><rect x="2" y="1" width="9" height="10" fill="#d8d8d8" stroke="#a4a4a4" stroke-width="1.4"/><rect x="4" y="3" width="5" height="5" fill="none" stroke="#a4a4a4"/><path d="M1 12H11" stroke="#a4a4a4"/></svg>
<div class="a" style="left:4px;top:415px;width:13px;height:1px;background:#c8c8c8"></div>
<svg class="a" style="left:7px;top:425.5px" width="11" height="11" viewBox="0 0 13 13"><path d="M1 11H12V7H6V3Q6 1 4 1Q2 1 2 3V11" fill="#d8d8d8" stroke="#a4a4a4" stroke-width="1.4"/></svg>
<div class="a" style="left:4px;top:446px;width:13px;height:1px;background:#c8c8c8"></div>
<svg class="a" style="left:7px;top:454.5px" width="11" height="11" viewBox="0 0 13 13"><path d="M1.5 12V6Q1.5 1 6.5 1Q11.5 1 11.5 6V12H8.5V6.5Q8.5 4 6.5 4Q4.5 4 4.5 6.5V12Z" fill="#d8d8d8" stroke="#a4a4a4" stroke-width="1.4"/></svg>
<div class="a" style="left:4px;top:469px;width:13px;height:1px;background:#c8c8c8"></div>
<svg class="a" style="left:7px;top:477.5px" width="11" height="11" viewBox="0 0 13 13"><path d="M1 11H12L9 6Q7 2 5 4L1 11Z M2 9H11" fill="#d8d8d8" stroke="#a4a4a4" stroke-width="1.4"/></svg>
<svg class="a" style="left:7px;top:495.5px" width="11" height="11" viewBox="0 0 13 13"><path d="M1 11H12L9 6Q7 2 5 4L1 11Z" fill="#d8d8d8" stroke="#a4a4a4" stroke-width="1.4"/><circle cx="7" cy="4" r="2.5" fill="none" stroke="#a4a4a4"/></svg>
<div class="a" style="left:4px;top:513px;width:13px;height:1px;background:#c8c8c8"></div>
<svg class="a" style="left:7px;top:519.5px" width="11" height="11" viewBox="0 0 13 13"><path d="M1 3H6M1 6H6M1 9H6M1 12H6M8 5Q11 5 11 8L9 8" stroke="#a4a4a4" stroke-width="1.1" fill="none"/></svg>
<svg class="a" style="left:7px;top:536.5px" width="11" height="11" viewBox="0 0 13 13"><path d="M1 9H12M1 12H12M3 7Q3 2 7 2Q10 2 10 5" stroke="#a4a4a4" stroke-width="1.1" fill="none"/><circle cx="5" cy="5" r="2" fill="none" stroke="#a4a4a4"/></svg>
<div class="a" style="left:4px;top:557px;width:13px;height:1px;background:#c8c8c8"></div>
<svg class="a" style="left:7px;top:562.5px" width="11" height="11" viewBox="0 0 13 13"><path d="M1 1H12V4H10V11H3V4H1Z" fill="#d8d8d8" stroke="#a4a4a4" stroke-width="1.4"/><path d="M5 4V10M8 4V10" stroke="#a4a4a4"/></svg>
<svg class="a" style="left:7px;top:576.5px" width="11" height="11" viewBox="0 0 13 13"><path d="M1 1H12V4H10V11H3V4H1Z" fill="#d8d8d8" stroke="#a4a4a4" stroke-width="1.4"/><circle cx="6.5" cy="7" r="2" fill="none" stroke="#a4a4a4"/></svg>
<svg class="a" style="left:7px;top:592.5px" width="11" height="11" viewBox="0 0 13 13"><path d="M1 11H12M2 11V8H5V3H9V11" stroke="#a4a4a4" stroke-width="1.2" fill="none"/></svg>
<svg class="a" style="left:7px;top:618.5px" width="11" height="11" viewBox="0 0 13 13"><path d="M1 10H12M1 8Q4 4 6.5 4Q9 4 12 8" stroke="#a4a4a4" stroke-width="1.3" fill="none"/></svg>
<div class="a" style="left:3px;top:96px;width:1.5px;height:1.5px;background:#a8a0a8"></div>
<div class="a" style="left:3px;top:99px;width:1.5px;height:1.5px;background:#a8a0a8"></div>
<div class="a" style="left:3px;top:102px;width:1.5px;height:1.5px;background:#a8a0a8"></div>
<div class="a" style="left:3px;top:105px;width:1.5px;height:1.5px;background:#a8a0a8"></div>
<div class="a" style="left:3px;top:110px;width:1.5px;height:1.5px;background:#a8a0a8"></div>
<div class="a" style="left:3px;top:113px;width:1.5px;height:1.5px;background:#a8a0a8"></div>
<div class="a" style="left:3px;top:116px;width:1.5px;height:1.5px;background:#a8a0a8"></div>
<div class="a" style="left:3px;top:119px;width:1.5px;height:1.5px;background:#a8a0a8"></div>
<div class="a" style="left:3px;top:125px;width:1.5px;height:1.5px;background:#a8a0a8"></div>
<div class="a" style="left:3px;top:128px;width:1.5px;height:1.5px;background:#a8a0a8"></div>
<div class="a" style="left:3px;top:131px;width:1.5px;height:1.5px;background:#a8a0a8"></div>
<div class="a" style="left:3px;top:134px;width:1.5px;height:1.5px;background:#a8a0a8"></div>
<div class="a" style="left:3px;top:140px;width:1.5px;height:1.5px;background:#a8a0a8"></div>
<div class="a" style="left:3px;top:143px;width:1.5px;height:1.5px;background:#a8a0a8"></div>
<div class="a" style="left:3px;top:146px;width:1.5px;height:1.5px;background:#a8a0a8"></div>
<div class="a" style="left:3px;top:149px;width:1.5px;height:1.5px;background:#a8a0a8"></div>
<div class="a" style="left:3px;top:153px;width:1.5px;height:1.5px;background:#a8a0a8"></div>
<div class="a" style="left:3px;top:156px;width:1.5px;height:1.5px;background:#a8a0a8"></div>
<div class="a" style="left:3px;top:159px;width:1.5px;height:1.5px;background:#a8a0a8"></div>
<div class="a" style="left:3px;top:162px;width:1.5px;height:1.5px;background:#a8a0a8"></div>
<div class="a" style="left:3px;top:166px;width:1.5px;height:1.5px;background:#a8a0a8"></div>
<div class="a" style="left:3px;top:169px;width:1.5px;height:1.5px;background:#a8a0a8"></div>
<div class="a" style="left:3px;top:172px;width:1.5px;height:1.5px;background:#a8a0a8"></div>
<div class="a" style="left:3px;top:175px;width:1.5px;height:1.5px;background:#a8a0a8"></div>
<div class="a" style="left:3px;top:180px;width:1.5px;height:1.5px;background:#a8a0a8"></div>
<div class="a" style="left:3px;top:183px;width:1.5px;height:1.5px;background:#a8a0a8"></div>
<div class="a" style="left:3px;top:186px;width:1.5px;height:1.5px;background:#a8a0a8"></div>
<div class="a" style="left:3px;top:189px;width:1.5px;height:1.5px;background:#a8a0a8"></div>
<div class="a" style="left:3px;top:194px;width:1.5px;height:1.5px;background:#a8a0a8"></div>
<div class="a" style="left:3px;top:197px;width:1.5px;height:1.5px;background:#a8a0a8"></div>
<div class="a" style="left:3px;top:200px;width:1.5px;height:1.5px;background:#a8a0a8"></div>
<div class="a" style="left:3px;top:203px;width:1.5px;height:1.5px;background:#a8a0a8"></div>
<div class="a" style="left:3px;top:209px;width:1.5px;height:1.5px;background:#a8a0a8"></div>
<div class="a" style="left:3px;top:212px;width:1.5px;height:1.5px;background:#a8a0a8"></div>
<div class="a" style="left:3px;top:215px;width:1.5px;height:1.5px;background:#a8a0a8"></div>
<div class="a" style="left:3px;top:218px;width:1.5px;height:1.5px;background:#a8a0a8"></div>
<div class="a" style="left:3px;top:222px;width:1.5px;height:1.5px;background:#a8a0a8"></div>
<div class="a" style="left:3px;top:225px;width:1.5px;height:1.5px;background:#a8a0a8"></div>
<div class="a" style="left:3px;top:228px;width:1.5px;height:1.5px;background:#a8a0a8"></div>
<div class="a" style="left:3px;top:231px;width:1.5px;height:1.5px;background:#a8a0a8"></div>
<div class="a" style="left:3px;top:236px;width:1.5px;height:1.5px;background:#a8a0a8"></div>
<div class="a" style="left:3px;top:239px;width:1.5px;height:1.5px;background:#a8a0a8"></div>
<div class="a" style="left:3px;top:242px;width:1.5px;height:1.5px;background:#a8a0a8"></div>
<div class="a" style="left:3px;top:245px;width:1.5px;height:1.5px;background:#a8a0a8"></div>
<div class="a" style="left:22px;top:927px;width:1578px;height:1px;background:#b8bcc4"></div>
<div class="a" style="left:22px;top:928px;width:1578px;height:55px;background:#e4e4e4"></div>
<div class="a" style="left:22.5px;top:934px;width:1.5px;height:1.5px;background:#9a9a9a"></div>
<div class="a" style="left:22.5px;top:937px;width:1.5px;height:1.5px;background:#9a9a9a"></div>
<div class="a" style="left:22.5px;top:940px;width:1.5px;height:1.5px;background:#9a9a9a"></div>
<div class="a" style="left:22.5px;top:943px;width:1.5px;height:1.5px;background:#9a9a9a"></div>
<div class="a" style="left:22.5px;top:946px;width:1.5px;height:1.5px;background:#9a9a9a"></div>
<div class="a" style="left:22.5px;top:949px;width:1.5px;height:1.5px;background:#9a9a9a"></div>
<div class="a" style="left:22.5px;top:952px;width:1.5px;height:1.5px;background:#9a9a9a"></div>
<div class="a" style="left:22.5px;top:955px;width:1.5px;height:1.5px;background:#9a9a9a"></div>
<div class="a" style="left:22.5px;top:958px;width:1.5px;height:1.5px;background:#9a9a9a"></div>
<div class="a" style="left:22.5px;top:961px;width:1.5px;height:1.5px;background:#9a9a9a"></div>
<div class="a" style="left:22.5px;top:964px;width:1.5px;height:1.5px;background:#9a9a9a"></div>
<div class="a" style="left:22.5px;top:967px;width:1.5px;height:1.5px;background:#9a9a9a"></div>
<div class="a" style="left:22.5px;top:970px;width:1.5px;height:1.5px;background:#9a9a9a"></div>
<div class="a" style="left:22.5px;top:973px;width:1.5px;height:1.5px;background:#9a9a9a"></div>
<div class="a" style="left:22.5px;top:976px;width:1.5px;height:1.5px;background:#9a9a9a"></div>
<div class="a" style="left:27px;top:932px;width:1568px;height:31px;background:linear-gradient(#ffffff,#f6f6f6 50%,#ececec);border:1px solid #cfcfcf;border-bottom:2px solid #7a7a7a;border-right:1px solid #9a9a9a"></div>
<div class="a" style="left:27px;top:963px;width:1568px;height:19px;background:linear-gradient(#fbfbfb,#f2f2f2 50%,#e2e2e2)"></div>
<div class="a" style="left:1527px;top:985px;width:1px;height:13px;background:#c8c8c8"></div>
<div class="a" style="left:1595px;top:928px;width:5px;height:55px;background:#f2f2f2"></div>
<svg class="a" style="left:262px;top:874px" width="46" height="50"><path d="M10 10 L10 35" stroke="#18c018" stroke-width="3"/><path d="M7 33 L10 42 L13 33Z" fill="#18c018"/><path d="M10 10 L32 8" stroke="#1a80d8" stroke-width="3"/><path d="M27 5 L34 8 L27 11Z" fill="#1a80d8"/><path d="M9 10 L23 16" stroke="#e01818" stroke-width="3.5"/><text x="34" y="12" font-size="10" fill="#3a9ae8" font-family="Liberation Sans">Z</text><text x="23" y="21" font-size="9" fill="#d02020" font-family="Liberation Sans">x</text><text x="7" y="46" font-size="8" fill="#4ad04a" font-family="Liberation Sans">Y</text></svg>
<div class="a" style="left:471px;top:296px;width:131px;height:38px;background:linear-gradient(#f2f5fa,#e6ebf3 48%,#dfe6f2 50%,#eef2f8);border:1px solid #c4d0e4"></div>
<svg class="a" style="left:474px;top:299px" width="14" height="14" viewBox="0 0 14 14"><path d="M1 4L4.5 1H13L9.5 4ZM9.5 4L13 1V10L9.5 13ZM1 4H9.5V13H1Z" fill="none" stroke="#222" stroke-width="1.4"/><path d="M1 13L4.5 10H13M4.5 1V10" stroke="#222" fill="none"/></svg>
<svg class="a" style="left:492px;top:299px" width="14" height="14" viewBox="0 0 14 14"><path d="M1 4L4.5 1H13L9.5 4ZM9.5 4L13 1V10L9.5 13ZM1 4H9.5V13H1Z" fill="none" stroke="#333" stroke-width="1.4"/><path d="M4.5 10H13M4.5 1V10L1 13" stroke="#999" fill="none"/></svg>
<div class="a" style="left:509px;top:297px;width:19px;height:18px;background:linear-gradient(#d4e8fb,#b8d6f4);border:1px solid #7aaee0"></div>
<svg class="a" style="left:511px;top:299px" width="14" height="14" viewBox="0 0 14 14"><path d="M1 4L4.5 1H13L9.5 4Z" fill="#3ee0ff"/><path d="M9.5 4L13 1V10L9.5 13Z" fill="#1e3ad8"/><rect x="1" y="4" width="8.5" height="9" fill="#4a82f0"/></svg>
<div class="a" style="left:530px;top:300px;width:1px;height:12px;background:#b8c0cc"></div>
<div class="a" style="left:534px;top:297px;width:19px;height:18px;background:linear-gradient(#d4e8fb,#b8d6f4);border:1px solid #7aaee0"></div>
<svg class="a" style="left:537px;top:299px" width="14" height="14" viewBox="0 0 14 14"><path d="M1 4L4.5 1H13L9.5 4Z" fill="#3ee0ff" stroke="#111"/><path d="M9.5 4L13 1V10L9.5 13Z" fill="#1a2a90" stroke="#111"/><rect x="1" y="4" width="8.5" height="9" fill="#5a8af0" stroke="#111" stroke-width="1.3"/></svg>
<div class="a" style="left:555px;top:300px;width:1px;height:12px;background:#b8c0cc"></div>
<svg class="a" style="left:561px;top:299px" width="14" height="14" viewBox="0 0 14 14"><rect x="0.7" y="0.7" width="12.6" height="3" fill="#111"/><rect x="9" y="0.7" width="4" height="12.6" fill="#fff" stroke="#111" stroke-width="1.2"/><path d="M9.5 4H12.5M9.5 7H12.5M9.5 10H12.5" stroke="#111"/><rect x="0.7" y="9" width="6" height="4.5" fill="#111"/><path d="M3 3V9" stroke="#111" stroke-dasharray="1 1"/></svg>
<svg class="a" style="left:580px;top:299px" width="14" height="14" viewBox="0 0 14 14"><rect x="1" y="1" width="11" height="12" fill="#f4f4f4" stroke="#222" stroke-width="1.4"/><rect x="4" y="8" width="3" height="2" fill="#333"/></svg>
<svg class="a" style="left:476px;top:318px" width="14" height="14" viewBox="0 0 14 14"><path d="M6 1V9L1 13M6 9H13" stroke="#3a3aa0" stroke-width="1.3" fill="none"/><path d="M4 3L6 0.5L8 3M11 7L13.5 9L11 11" stroke="#3a3aa0" fill="none"/><circle cx="6" cy="9" r="1.4" fill="#8a3ad0"/></svg>
<svg class="a" style="left:494px;top:323px" width="6" height="4"><path d="M0 0.5H5L2.5 3.5Z" fill="#222"/></svg>
<div class="a" style="left:504px;top:318px;width:1px;height:13px;background:#b8c0cc"></div>
<svg class="a" style="left:510px;top:318px" width="14" height="14" viewBox="0 0 14 14"><circle cx="6" cy="6" r="4.8" fill="#e8eeff" stroke="#1a2a90" stroke-width="1.4"/><path d="M9.5 9.5L13.5 13.5" stroke="#5a4ab0" stroke-width="2.2"/><path d="M4 3.5H7L8 4.5V8.5H4Z" fill="#fff" stroke="#111" stroke-width=".9"/></svg>
<svg class="a" style="left:528px;top:318px" width="14" height="14" viewBox="0 0 14 14"><circle cx="6" cy="6" r="4.8" fill="#e8eeff" stroke="#1a2a90" stroke-width="1.4"/><path d="M9.5 9.5L13.5 13.5" stroke="#5a4ab0" stroke-width="2.2"/><path d="M4 7Q4 4 7 4.5L6 3M7 4.5L5.5 6" stroke="#1a2a90" fill="none"/></svg>
<svg class="a" style="left:547px;top:318px" width="14" height="14" viewBox="0 0 14 14"><circle cx="6" cy="6" r="4.8" fill="none" stroke="#c4c8d4" stroke-width="1.2"/><path d="M9.5 9.5L13.5 13.5" stroke="#c4c8d4" stroke-width="2"/></svg>
<div class="a" style="left:566px;top:318px;width:1px;height:13px;background:#b8c0cc"></div>
<svg class="a" style="left:573px;top:318px" width="14" height="14" viewBox="0 0 14 14"><path d="M1 1L7 6" stroke="#1a50c0" stroke-width="3"/><path d="M6 6V13M3 10L6 13" stroke="#888" fill="none"/><circle cx="11" cy="8" r="2" fill="none" stroke="#888"/><path d="M11 10V13M9 13H13" stroke="#888"/></svg>
<svg class="a" style="left:592px;top:323px" width="6" height="4"><path d="M0 0.5H5L2.5 3.5Z" fill="#222"/></svg>
<div id="status" class="a"><div class="t a">Щелкните левой кнопкой мыши на объекте для его выделения (вместе с Ctrl - добавить к выделенным)</div></div>
</body></html>
